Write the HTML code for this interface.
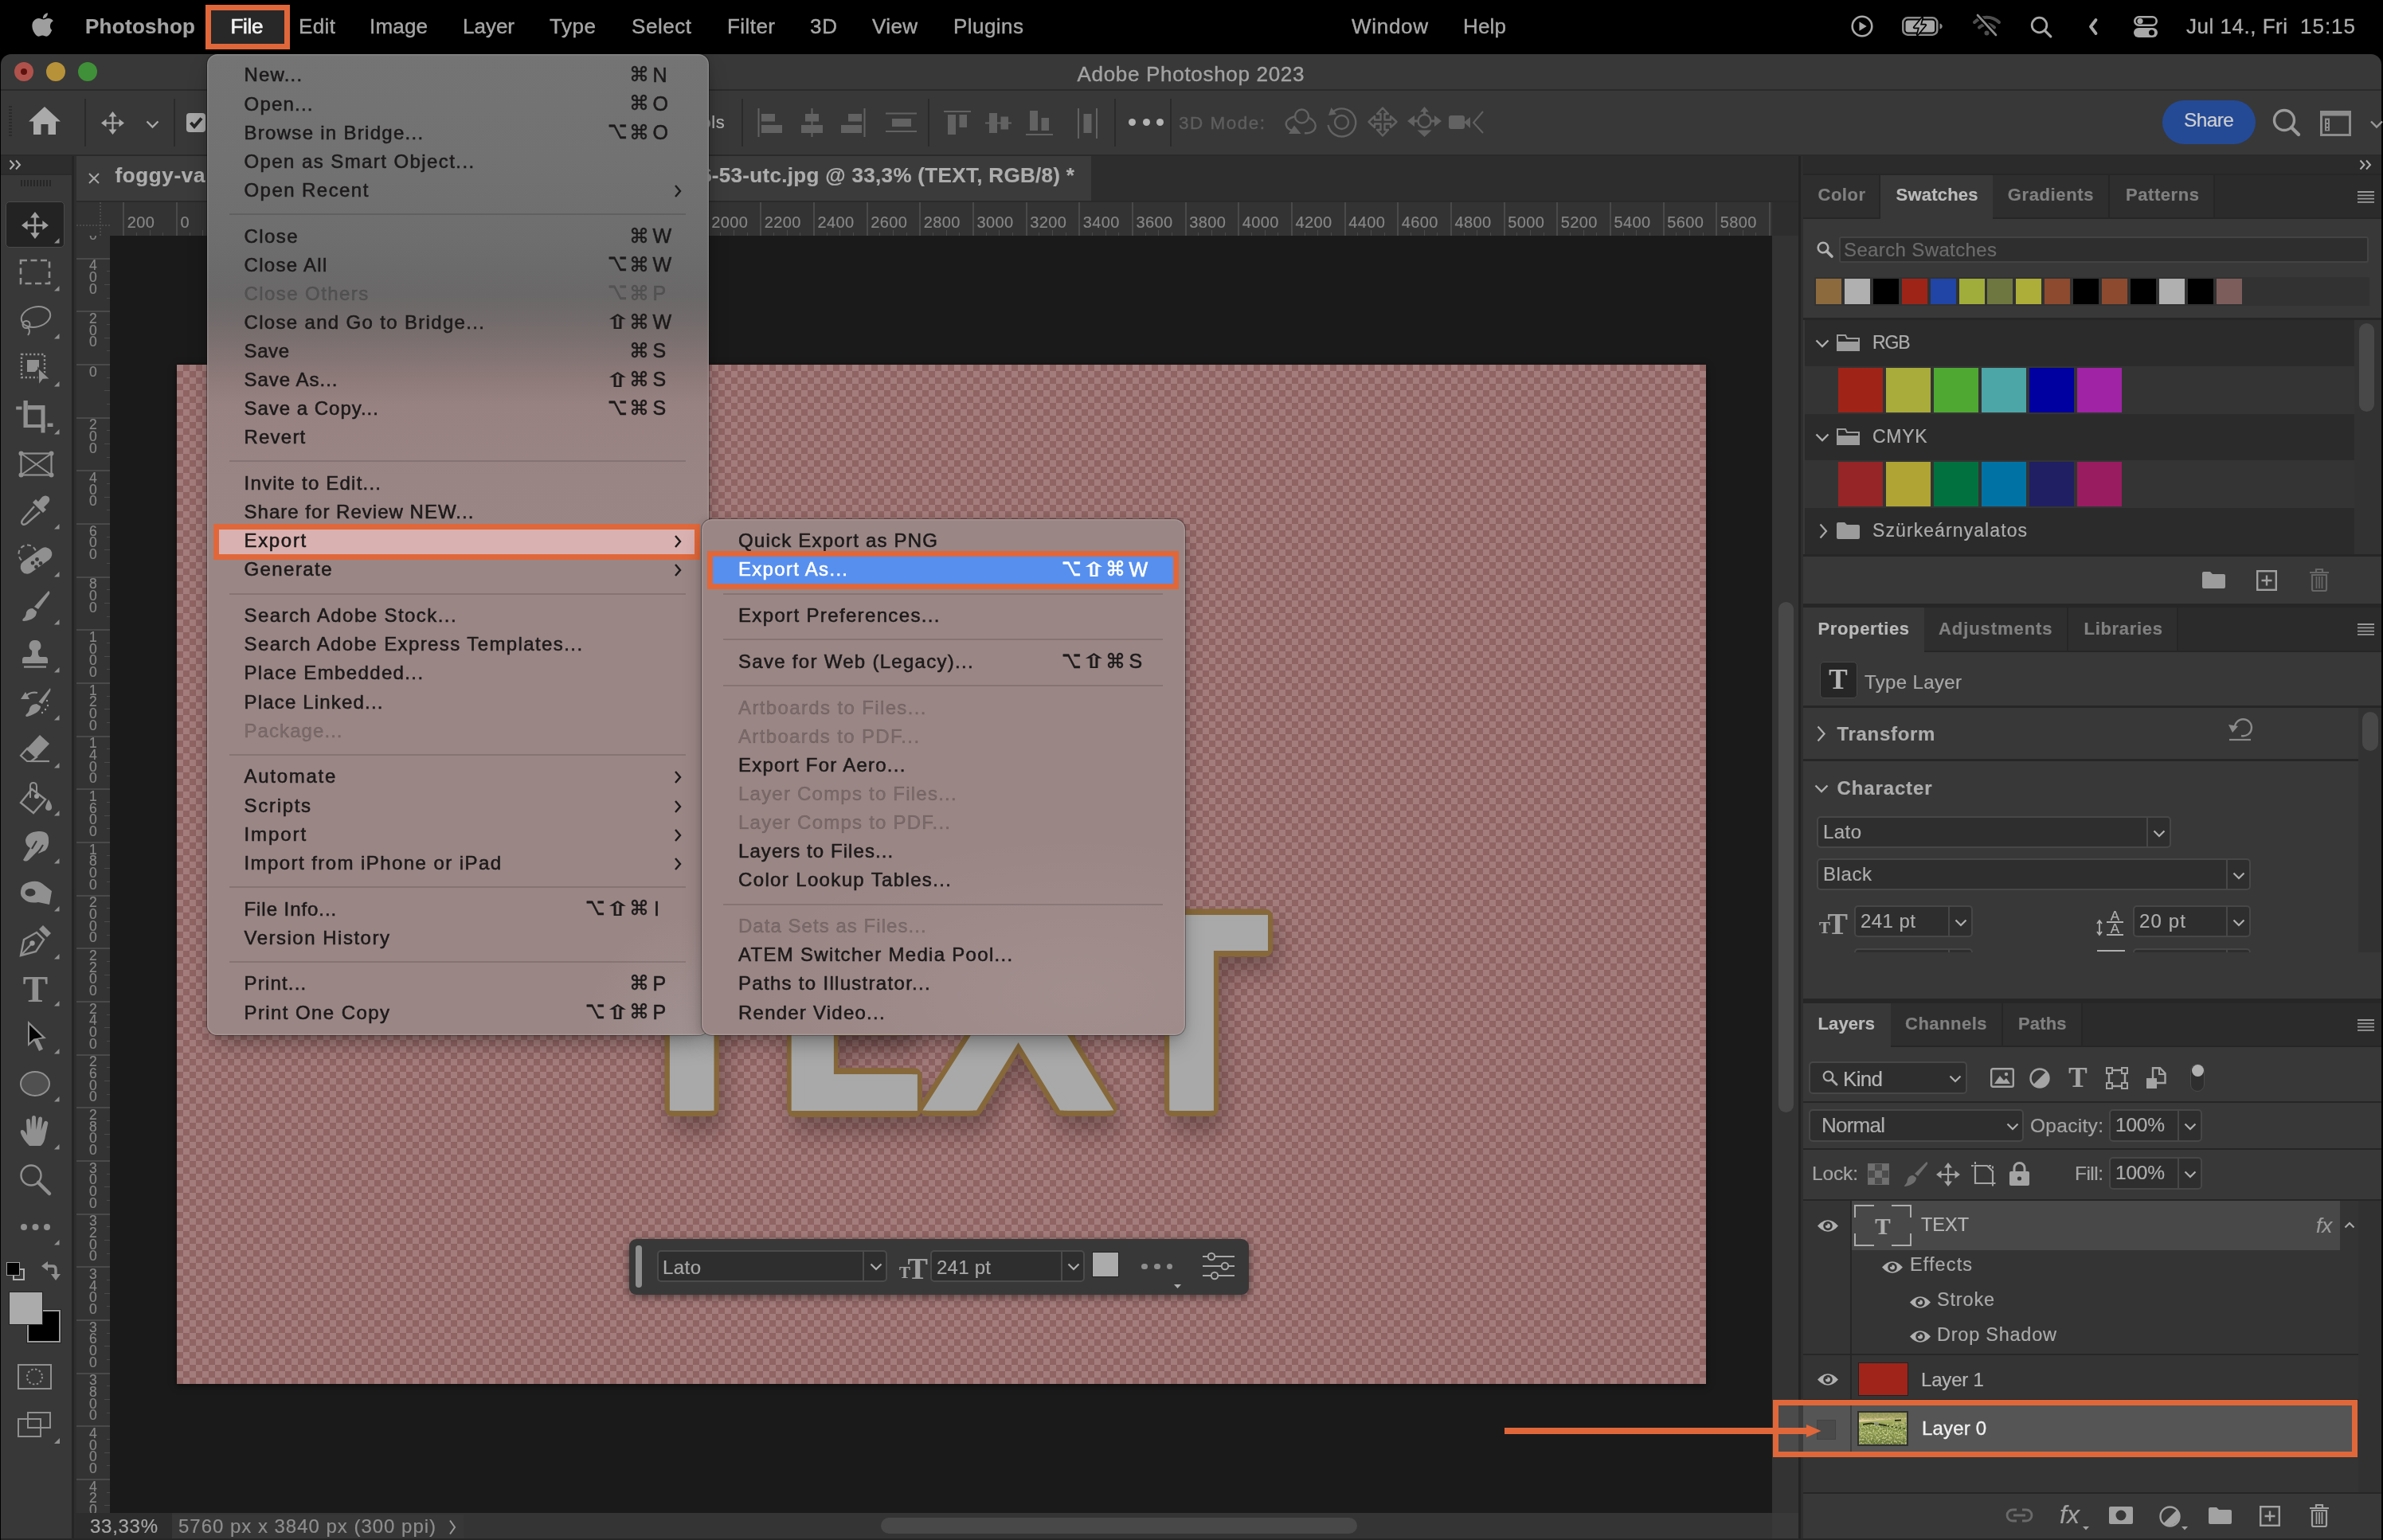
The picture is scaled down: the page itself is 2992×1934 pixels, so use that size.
<!DOCTYPE html>
<html lang="en"><head><meta charset="utf-8"><title>Adobe Photoshop 2023</title><style>html,body{margin:0;padding:0;background:#000;}body{width:2992px;height:1934px;overflow:hidden;position:relative;will-change:transform;font-family:'Liberation Sans','DejaVu Sans',sans-serif;}div,span,svg{position:absolute;}span{white-space:pre;-webkit-text-stroke:.2px;}svg{overflow:visible;}</style></head>
<body>
<div style="left:0px;top:0px;width:2992px;height:68px;background:#000;"></div>
<svg style="left:40px;top:14.5px;" width="27" height="32" viewBox="-1 0 28 32"><path fill="#9e9e9e" d="M19.6 0.6c0.2 1.9-0.5 3.7-1.6 5-1.1 1.4-2.9 2.4-4.6 2.3-0.2-1.8 0.6-3.7 1.7-4.9C16.2 1.6 18.100 0.700 19.6 0.6zM25.2 23.1c-0.7 1.6-1 2.300-1.900 3.700-1.300 2-3.100 4.400-5.300 4.400-2 0-2.500-1.300-5.200-1.300-2.700 0-3.300 1.300-5.200 1.300-2.200 0-3.900-2.200-5.200-4.200C-1.100 21.600-1.500 15.100 1 11.700c1.700-2.500 4.400-3.900 6.900-3.900 2.600 0 4.200 1.400 6.300 1.400 2.100 0 3.300-1.400 6.300-1.400 2.300 0 4.700 1.200 6.400 3.400C21.300 14.300 22.200 21.700 25.200 23.100z"/></svg>
<span style="left:107.0px;top:19.6px;font-size:26px;line-height:26px;color:#a2a2a2;font-weight:700;letter-spacing:0.28px;">Photoshop</span>
<div style="left:258px;top:6px;width:106px;height:56px;background:#282828;border:7px solid #e0673a;box-sizing:border-box;"></div>
<span style="left:289.5px;top:19.6px;font-size:26px;line-height:26px;color:#f2f2f2;letter-spacing:-0.30px;-webkit-text-stroke:.7px;">File</span>
<span style="left:375.0px;top:19.6px;font-size:26px;line-height:26px;color:#a6a6a6;letter-spacing:0.40px;-webkit-text-stroke:.4px;">Edit</span>
<span style="left:464.0px;top:19.6px;font-size:26px;line-height:26px;color:#a6a6a6;letter-spacing:0.18px;-webkit-text-stroke:.4px;">Image</span>
<span style="left:581.0px;top:19.6px;font-size:26px;line-height:26px;color:#a6a6a6;letter-spacing:-0.01px;-webkit-text-stroke:.4px;">Layer</span>
<span style="left:690.0px;top:19.6px;font-size:26px;line-height:26px;color:#a6a6a6;letter-spacing:0.54px;-webkit-text-stroke:.4px;">Type</span>
<span style="left:793.0px;top:19.6px;font-size:26px;line-height:26px;color:#a6a6a6;letter-spacing:0.55px;-webkit-text-stroke:.4px;">Select</span>
<span style="left:913.0px;top:19.6px;font-size:26px;line-height:26px;color:#a6a6a6;letter-spacing:0.44px;-webkit-text-stroke:.4px;">Filter</span>
<span style="left:1017.0px;top:19.6px;font-size:26px;line-height:26px;color:#a6a6a6;letter-spacing:0.75px;-webkit-text-stroke:.4px;">3D</span>
<span style="left:1095.0px;top:19.6px;font-size:26px;line-height:26px;color:#a6a6a6;letter-spacing:0.37px;-webkit-text-stroke:.4px;">View</span>
<span style="left:1197.0px;top:19.6px;font-size:26px;line-height:26px;color:#a6a6a6;letter-spacing:0.45px;-webkit-text-stroke:.4px;">Plugins</span>
<span style="left:1697.0px;top:19.6px;font-size:26px;line-height:26px;color:#a6a6a6;letter-spacing:0.70px;-webkit-text-stroke:.4px;">Window</span>
<span style="left:1837.0px;top:19.6px;font-size:26px;line-height:26px;color:#a6a6a6;letter-spacing:0.17px;-webkit-text-stroke:.4px;">Help</span>
<svg style="left:2324px;top:19px;" width="28" height="28" viewBox="0 0 28 28"><circle cx="14" cy="14" r="12.3" fill="none" stroke="#a8a8a8" stroke-width="2.6"/><path d="M10.5 8.300 L19.700 14 L10.5 19.700Z" fill="#a8a8a8"/></svg>
<svg style="left:2388px;top:21px;" width="52" height="25" viewBox="0 0 52 25"><rect x="1.3" y="1.3" width="43" height="21.4" rx="6" fill="none" stroke="#8a8a8a" stroke-width="2.6"/><rect x="4.5" y="4.5" width="36.600" height="15" rx="3.200" fill="#a8a8a8"/><path d="M47.5 8.5 v7 c2.400-0.600 3.200-2 3.200-3.500 s-0.800-2.900-3.200-3.500z" fill="#8a8a8a"/><path d="M25.5 1.500 L15.500 13.500 H22 L19.500 22.500 L29.500 10.500 H23 Z" fill="#000" stroke="#000" stroke-width="3.400" stroke-linejoin="round"/><path d="M25.5 1.500 L15.500 13.500 H22 L19.500 22.500 L29.500 10.500 H23 Z" fill="#a8a8a8"/></svg>
<svg style="left:2476px;top:17px;" width="38" height="30" viewBox="0 0 38 30"><g fill="none" stroke="#4e4e4e" stroke-width="4" stroke-linecap="round"><path d="M3 11 C11.500 2.500 25.500 2.500 34 11"/><path d="M9 17.500 C14.500 12 22.500 12 28 17.500"/></g><circle cx="18.500" cy="24.500" r="3" fill="#4e4e4e"/><path d="M7 2 L30 27" stroke="#000" stroke-width="6"/><path d="M7 2 L30 27" stroke="#8c8c8c" stroke-width="2.600" stroke-linecap="round"/></svg>
<svg style="left:2549px;top:20px;" width="28" height="28" viewBox="0 0 28 28"><circle cx="11.500" cy="11.500" r="9.300" fill="none" stroke="#a8a8a8" stroke-width="2.800"/><path d="M18.300 18.300 L25.800 25.800" stroke="#a8a8a8" stroke-width="3.200" stroke-linecap="round"/></svg>
<svg style="left:2622px;top:23px;" width="12" height="21" viewBox="0 0 12 21"><path d="M9.500 2 L3 10.500 L9.500 19" fill="none" stroke="#a8a8a8" stroke-width="3.800" stroke-linecap="round" stroke-linejoin="round"/></svg>
<svg style="left:2679px;top:20px;" width="30" height="27" viewBox="0 0 30 27"><rect x="1.300" y="1.300" width="27.400" height="10.400" rx="5.200" fill="none" stroke="#a8a8a8" stroke-width="2.600"/><circle cx="8" cy="6.500" r="3.600" fill="#a8a8a8"/><rect x="0" y="15" width="30" height="12" rx="6" fill="#a8a8a8"/><circle cx="22.500" cy="21" r="3.500" fill="#000"/></svg>
<span style="left:2745.0px;top:19.6px;font-size:26px;line-height:26px;color:#adadad;letter-spacing:0.51px;-webkit-text-stroke:.3px;">Jul 14., Fri</span>
<span style="left:2888.0px;top:19.6px;font-size:26px;line-height:26px;color:#adadad;letter-spacing:0.98px;-webkit-text-stroke:.3px;">15:15</span>
<div style="left:1px;top:68px;width:2989px;height:1866px;background:#383838;border-radius:13px 13px 0 0;"></div>
<div style="left:18px;top:78px;width:24px;height:24px;background:#b0524c;border-radius:50%;"></div>
<div style="left:58px;top:78px;width:24px;height:24px;background:#b89239;border-radius:50%;"></div>
<div style="left:98px;top:78px;width:24px;height:24px;background:#3f9038;border-radius:50%;"></div>
<div style="left:26px;top:86px;width:8px;height:8px;background:#5e120d;border-radius:50%;"></div>
<span style="left:1352.5px;top:79.5px;font-size:26px;line-height:26px;color:#a2a2a2;letter-spacing:0.69px;-webkit-text-stroke:.4px;">Adobe Photoshop 2023</span>
<div style="left:1px;top:111.5px;width:2989px;height:2px;background:#2a2a2a;"></div>
<div style="left:1px;top:114px;width:2989px;height:79px;background:#383838;"></div>
<div style="left:1px;top:193.5px;width:2989px;height:2px;background:#2a2a2a;"></div>
<div style="left:11px;top:133px;width:4px;height:39px;background:repeating-linear-gradient(#2a2a2a 0 2px,transparent 2px 4px);"></div>
<div style="left:106px;top:124px;width:2px;height:60px;background:#2a2a2a;"></div>
<div style="left:218px;top:124px;width:2px;height:60px;background:#2a2a2a;"></div>
<div style="left:931px;top:124px;width:2px;height:60px;background:#2a2a2a;"></div>
<div style="left:1165px;top:124px;width:2px;height:60px;background:#2a2a2a;"></div>
<div style="left:1399px;top:124px;width:2px;height:60px;background:#2a2a2a;"></div>
<div style="left:1469px;top:124px;width:2px;height:60px;background:#2a2a2a;"></div>
<svg style="left:36px;top:134px;" width="40" height="36" viewBox="0 0 40 36"><path fill="#aaaaaa" d="M20 0 L40 18.500 L34 18.500 L34 35 L24.500 35 L24.500 22 L15.500 22 L15.500 35 L6 35 L6 18.500 L0 18.500Z"/></svg>
<svg style="left:126.5px;top:139.5px;" width="29" height="29" viewBox="0 0 29 29"><g stroke="#aaaaaa" stroke-width="2.2" fill="none"><path d="M14.500 4 V25 M4 14.500 H25"/></g><path fill="#aaaaaa" d="M14.500 0 L19.500 6.500 H9.500Z M14.500 29 L9.500 22.500 H19.500Z M0 14.500 L6.500 9.500 V19.500Z M29 14.500 L22.500 9.500 V19.500Z"/></svg>
<svg style="left:183px;top:151px;" width="17" height="11" viewBox="0 0 17 11"><path d="M1.500 1.500 L8.500 8.500 L15.500 1.500" fill="none" stroke="#aaaaaa" stroke-width="2.400"/></svg>
<div style="left:234px;top:142px;width:24px;height:24px;background:#a8a8a8;border-radius:4px;"></div>
<svg style="left:234px;top:142px;" width="24" height="24" viewBox="0 0 24 24"><path d="M5.500 12 L10 17 L19 6.500" fill="none" stroke="#262626" stroke-width="4"/></svg>
<span style="left:270.0px;top:143.1px;font-size:22px;line-height:22px;color:#b0b0b0;">Auto-Select:</span>
<span style="left:647.7px;top:143.1px;font-size:22px;line-height:22px;color:#b0b0b0;letter-spacing:0.63px;">Show Transform Controls</span>
<svg style="left:951px;top:136px;" width="32" height="36" viewBox="0 0 32 36"><rect x="0.500" y="0" width="2" height="36" fill="#626262"/><rect x="5" y="7" width="17" height="9.500" fill="#626262"/><rect x="5" y="21" width="26" height="10" fill="#626262"/></svg>
<svg style="left:1006px;top:136px;" width="27" height="36" viewBox="0 0 27 36"><rect x="12.500" y="0" width="2" height="36" fill="#626262"/><rect x="5" y="7" width="17" height="9.500" fill="#626262"/><rect x="0" y="21" width="27" height="10" fill="#626262"/></svg>
<svg style="left:1055px;top:136px;" width="32" height="36" viewBox="0 0 32 36"><rect x="29.500" y="0" width="2" height="36" fill="#626262"/><rect x="10" y="7" width="17" height="9.500" fill="#626262"/><rect x="1" y="21" width="26" height="10" fill="#626262"/></svg>
<svg style="left:1112px;top:136px;" width="40" height="36" viewBox="0 0 40 36"><rect x="0" y="5.500" width="39" height="2" fill="#626262"/><rect x="8" y="13" width="24" height="10" fill="#626262"/><rect x="0" y="28" width="39" height="2" fill="#626262"/></svg>
<svg style="left:1185px;top:136px;" width="34" height="36" viewBox="0 0 34 36"><rect x="0" y="3" width="34" height="2" fill="#626262"/><rect x="5" y="8" width="10" height="25" fill="#626262"/><rect x="19.500" y="8" width="9.500" height="16" fill="#626262"/></svg>
<svg style="left:1237px;top:136px;" width="33" height="36" viewBox="0 0 33 36"><rect x="0" y="17.500" width="33" height="2" fill="#626262"/><rect x="5" y="6" width="10" height="25" fill="#626262"/><rect x="19.500" y="10.500" width="9.500" height="16" fill="#626262"/></svg>
<svg style="left:1288px;top:136px;" width="34" height="36" viewBox="0 0 34 36"><rect x="0" y="32" width="34" height="2" fill="#626262"/><rect x="5" y="3" width="10" height="25" fill="#626262"/><rect x="19.500" y="12" width="9.500" height="16" fill="#626262"/></svg>
<svg style="left:1353px;top:136px;" width="26" height="36" viewBox="0 0 26 36"><rect x="0" y="0" width="2" height="38" fill="#626262"/><rect x="7.500" y="7" width="10" height="24" fill="#626262"/><rect x="23" y="0" width="2" height="38" fill="#626262"/></svg>
<div style="left:1417.1px;top:149px;width:9px;height:9px;background:#b4b4b4;border-radius:50%;"></div>
<div style="left:1434.5px;top:149px;width:9px;height:9px;background:#b4b4b4;border-radius:50%;"></div>
<div style="left:1451.9px;top:149px;width:9px;height:9px;background:#b4b4b4;border-radius:50%;"></div>
<span style="left:1480.0px;top:143.5px;font-size:22.5px;line-height:22.5px;color:#5e5e5e;letter-spacing:1.49px;-webkit-text-stroke:.4px;">3D Mode:</span>
<svg style="left:1611px;top:134px;" width="43" height="38" viewBox="0 0 43 38"><g fill="none" stroke="#626262" stroke-width="2.400"><circle cx="23.500" cy="12" r="8.500"/><path d="M14 12.500 C-2 17 2 30 17 31.500"/><path d="M33 14 C47 22 40 35 27 33"/></g><path d="M7 34 L14 23.500 L22.500 34Z" fill="#626262"/></svg>
<svg style="left:1665px;top:134px;" width="39" height="38" viewBox="0 0 39 38"><g fill="none" stroke="#626262" stroke-width="2.400"><circle cx="19.500" cy="19.500" r="8.500"/><path d="M8.500 6.500 A17.500 17.500 0 1 1 2.500 23"/></g><path d="M3 11 L6.500 1 L13 9.500Z" fill="#626262"/></svg>
<svg style="left:1717px;top:134px;" width="38" height="38" viewBox="0 0 38 38"><path fill="none" stroke="#626262" stroke-width="2.400" stroke-linejoin="round" d="M19 1.500 L26 9 H21.500 V16.500 H29 V12 L36.500 19 L29 26 V21.500 H21.500 V29 H26 L19 36.500 L12 29 H16.500 V21.500 H9 V26 L1.500 19 L9 12 V16.500 H16.500 V9 H12Z"/></svg>
<svg style="left:1767px;top:134px;" width="43" height="38" viewBox="0 0 43 38"><circle cx="21.500" cy="18" r="8" fill="none" stroke="#626262" stroke-width="2.400"/><path fill="#626262" d="M21.500 0 L27 6.500 H16Z M21.500 38 L12.500 29.500 H30.500Z M0 18 L9 11 V25Z M43 18 L34 11 V25Z"/><path d="M21.500 5 V10 M6 18 H13 M30 18 H37" stroke="#626262" stroke-width="3"/></svg>
<svg style="left:1819px;top:134px;" width="44" height="38" viewBox="0 0 44 38"><rect x="0" y="11" width="20" height="17" rx="3" fill="#626262"/><path d="M19 19.500 L27 13 V27Z" fill="#626262"/><path d="M43 6 L31 20 L43 33" fill="none" stroke="#626262" stroke-width="2"/></svg>
<div style="left:2715px;top:126px;width:117px;height:55px;background:#244a96;border-radius:28px;"></div>
<span style="left:2742.0px;top:139.3px;font-size:24.5px;line-height:24.5px;color:#cfcfcf;letter-spacing:-0.60px;">Share</span>
<svg style="left:2852px;top:136px;" width="38" height="38" viewBox="0 0 38 38"><circle cx="16" cy="15" r="12.500" fill="none" stroke="#9a9a9a" stroke-width="3.400"/><path d="M25 24 L34 33" stroke="#9a9a9a" stroke-width="4.400" stroke-linecap="round"/></svg>
<svg style="left:2913px;top:139px;" width="40" height="33" viewBox="0 0 40 33"><rect x="1.500" y="1.500" width="36" height="29" fill="none" stroke="#8c8c8c" stroke-width="3"/><rect x="1.500" y="1.500" width="36" height="5" fill="#8c8c8c"/><rect x="6" y="9.500" width="6" height="16" fill="#8c8c8c"/><rect x="8" y="12" width="2" height="3" fill="#383838"/><rect x="8" y="17" width="2" height="3" fill="#383838"/><rect x="8" y="22" width="2" height="2" fill="#383838"/></svg>
<svg style="left:2976px;top:151px;" width="14" height="11" viewBox="0 0 14 11"><path d="M1 1.500 L8 8.500 L15 1.500" fill="none" stroke="#9a9a9a" stroke-width="2.400"/></svg>
<div style="left:1px;top:196px;width:89px;height:1738px;background:#383838;"></div>
<div style="left:1px;top:196px;width:89px;height:22px;background:#2d2d2d;"></div>
<div style="left:1px;top:218px;width:89px;height:2px;background:#2a2a2a;"></div>
<svg style="left:11px;top:200px;" width="16" height="14" viewBox="0 0 16 14"><path d="M1.500 1.500 L6.500 7 L1.500 12.500 M9 1.500 L14 7 L9 12.500" fill="none" stroke="#b0b0b0" stroke-width="2"/></svg>
<div style="left:26px;top:226px;width:38px;height:8px;background:repeating-linear-gradient(90deg,#262626 0 2px,transparent 2px 4px);"></div>
<div style="left:7px;top:253px;width:74px;height:58px;background:#232323;border:1px solid #4a4a4a;box-sizing:border-box;border-radius:5px;"></div>
<svg style="left:23.5px;top:263px;" width="40" height="40" viewBox="0 0 40 40"><g transform="translate(3 3) scale(1.170)"><g stroke="#a0a0a0" stroke-width="2.2" fill="none"><path d="M14.500 4 V25 M4 14.500 H25"/></g><path fill="#a0a0a0" d="M14.500 0 L19.500 6.500 H9.500Z M14.500 29 L9.500 22.500 H19.500Z M0 14.500 L6.500 9.500 V19.500Z M29 14.500 L22.500 9.500 V19.500Z"/></g></svg>
<svg style="left:68px;top:299px;" width="6.5" height="6.5" viewBox="0 0 6.5 6.5"><path d="M6.500 0 V6.500 H0Z" fill="#909090"/></svg>
<svg style="left:23.5px;top:322.9px;" width="40" height="40" viewBox="0 0 40 40"><rect x="2" y="4" width="36" height="29" fill="none" stroke="#909090" stroke-width="2.600" stroke-dasharray="8 4.500"/></svg>
<svg style="left:68px;top:358.9px;" width="6.5" height="6.5" viewBox="0 0 6.5 6.5"><path d="M6.500 0 V6.500 H0Z" fill="#909090"/></svg>
<svg style="left:23.5px;top:382.8px;" width="40" height="40" viewBox="0 0 40 40"><ellipse cx="21" cy="15" rx="18.500" ry="12.500" fill="none" stroke="#909090" stroke-width="2" transform="rotate(-14 21 15)"/><circle cx="9" cy="24.500" r="4.500" fill="none" stroke="#909090" stroke-width="2"/><path d="M11 28 Q15 33 11 38" fill="none" stroke="#909090" stroke-width="2" /></svg>
<svg style="left:68px;top:418.8px;" width="6.5" height="6.5" viewBox="0 0 6.5 6.5"><path d="M6.500 0 V6.500 H0Z" fill="#909090"/></svg>
<svg style="left:23.5px;top:442.7px;" width="40" height="40" viewBox="0 0 40 40"><rect x="3" y="2" width="29" height="29" fill="none" stroke="#909090" stroke-width="2.400" stroke-dasharray="2.400 2.600"/><path d="M10 9 H25 V19 L20 24 H10Z" fill="#909090"/><path d="M24 19 L39 33 L30 33.500 L24.500 41Z" fill="#909090" stroke="#383838" stroke-width="1.500"/></svg>
<svg style="left:68px;top:478.7px;" width="6.5" height="6.5" viewBox="0 0 6.5 6.5"><path d="M6.500 0 V6.500 H0Z" fill="#909090"/></svg>
<svg style="left:23.5px;top:502.6px;" width="40" height="40" viewBox="0 0 40 40"><path d="M5.500 0 H10.800 V30 H32.500 V34 H5.500Z" fill="#909090" /><path d="M10.800 6 H32.500 V40.500 H27.500 V11.500 H10.800Z" fill="#909090" /><path d="M-3.800 7.500 H3.500 V11.500 H-3.800Z" fill="#909090" /><path d="M35.500 28.500 H42.500 V33 H35.500Z" fill="#909090" /></svg>
<svg style="left:68px;top:538.6px;" width="6.5" height="6.5" viewBox="0 0 6.5 6.5"><path d="M6.500 0 V6.500 H0Z" fill="#909090"/></svg>
<svg style="left:23.5px;top:562.5px;" width="40" height="40" viewBox="0 0 40 40"><rect x="2.500" y="6.500" width="38" height="27" fill="none" stroke="#909090" stroke-width="2.200"/><path d="M2.500 6.500 L40.500 33.500 M40.500 6.500 L2.500 33.500" fill="none" stroke="#909090" stroke-width="2" /><circle cx="2.5" cy="6.5" r="3" fill="#909090"/><circle cx="2.5" cy="33.5" r="3" fill="#909090"/><circle cx="40.5" cy="6.5" r="3" fill="#909090"/><circle cx="40.5" cy="33.5" r="3" fill="#909090"/></svg>
<svg style="left:23.5px;top:622.4px;" width="40" height="40" viewBox="0 0 40 40"><path d="M19 14 L5 30 Q2 34 4 36 Q6 38 10 35 L26 21" fill="none" stroke="#909090" stroke-width="2.4" /><path d="M17 9 L21 5 L24 8 L29 2 Q33 -1 37 2 Q40 6 36 10 L31 15 L34 18 L30 22Z" fill="#909090" /></svg>
<svg style="left:68px;top:658.4px;" width="6.5" height="6.5" viewBox="0 0 6.5 6.5"><path d="M6.500 0 V6.500 H0Z" fill="#909090"/></svg>
<svg style="left:23.5px;top:682.3px;" width="40" height="40" viewBox="0 0 40 40"><circle cx="10.500" cy="13.500" r="11" fill="none" stroke="#909090" stroke-width="2" stroke-dasharray="5 3.500"/><rect x="-1" y="13.500" width="45" height="17" rx="8.500" fill="#909090" transform="rotate(-36 21.500 22)"/><circle cx="17" cy="25" r="2.400" fill="#383838"/><circle cx="22.500" cy="20.500" r="2.400" fill="#383838"/><circle cx="21.500" cy="30" r="2.400" fill="#383838"/><circle cx="27" cy="25.500" r="2.400" fill="#383838"/></svg>
<svg style="left:68px;top:718.3px;" width="6.5" height="6.5" viewBox="0 0 6.5 6.5"><path d="M6.500 0 V6.500 H0Z" fill="#909090"/></svg>
<svg style="left:23.5px;top:742.2px;" width="40" height="40" viewBox="0 0 40 40"><path d="M37 0 Q39 1 38 4 L24 23 L19 20 Z" fill="#909090" /><path d="M17 22 L22 26 Q22 36 6 38 Q3 38 5 35 Q9 32 9 27 Q11 22 17 22Z" fill="#909090" /></svg>
<svg style="left:68px;top:778.2px;" width="6.5" height="6.5" viewBox="0 0 6.5 6.5"><path d="M6.500 0 V6.500 H0Z" fill="#909090"/></svg>
<svg style="left:23.5px;top:802.1px;" width="40" height="40" viewBox="0 0 40 40"><path d="M20 2 A7 7 0 0 1 24 15 Q23 20 26 23 H33 Q36 23 36 27 V31 H4 V27 Q4 23 7 23 H14 Q17 20 16 15 A7 7 0 0 1 20 2Z" fill="#909090" /><path d="M6 35.500 H34" fill="none" stroke="#909090" stroke-width="2.4" /></svg>
<svg style="left:68px;top:838.1px;" width="6.5" height="6.5" viewBox="0 0 6.5 6.5"><path d="M6.500 0 V6.500 H0Z" fill="#909090"/></svg>
<svg style="left:23.5px;top:862px;" width="40" height="40" viewBox="0 0 40 40"><path d="M39 2 Q40 4 39 6 L29 22 L24.500 19.500 Z" fill="#909090" /><path d="M22 22 L27 25 Q27 33 10 38 Q7 38 9 35 Q13 32 13 28 Q15 22 22 22Z" fill="#909090" /><path d="M7 14 Q13 6 23 8" fill="none" stroke="#909090" stroke-width="2.2" /><path d="M2 16 L8 7 L13 16Z" fill="#909090" /><circle cx="35" cy="18" r="1.200" fill="#9c9c9c"/><circle cx="36" cy="24" r="1.200" fill="#9c9c9c"/><circle cx="33" cy="29" r="1.200" fill="#9c9c9c"/><circle cx="29" cy="33" r="1.200" fill="#9c9c9c"/></svg>
<svg style="left:68px;top:898px;" width="6.5" height="6.5" viewBox="0 0 6.5 6.5"><path d="M6.500 0 V6.500 H0Z" fill="#909090"/></svg>
<svg style="left:23.5px;top:921.9px;" width="40" height="40" viewBox="0 0 40 40"><path d="M26 1 L38 12 L21 30 L9 19Z" fill="#909090" /><path d="M11 17 L2 27 L10 34 H15 L23 28" fill="none" stroke="#909090" stroke-width="2.2" /><path d="M14 34 H38" fill="none" stroke="#909090" stroke-width="2.2" /></svg>
<svg style="left:68px;top:957.9px;" width="6.5" height="6.5" viewBox="0 0 6.5 6.5"><path d="M6.500 0 V6.500 H0Z" fill="#909090"/></svg>
<svg style="left:23.5px;top:981.8px;" width="40" height="40" viewBox="0 0 40 40"><path d="M16 9 L33 22 L18 39 L2 26Z" fill="none" stroke="#909090" stroke-width="2.4" /><path d="M14 20 V5 Q14 1 18 1 Q22 1 22 6 V13" fill="none" stroke="#909090" stroke-width="2" /><circle cx="22" cy="18" r="3" fill="#9c9c9c"/><path d="M37 22 Q42 30 41 33 Q40 36 37 36 Q34 36 33 33 Q33 29 37 22Z" fill="#909090" /></svg>
<svg style="left:68px;top:1017.8px;" width="6.5" height="6.5" viewBox="0 0 6.5 6.5"><path d="M6.500 0 V6.500 H0Z" fill="#909090"/></svg>
<svg style="left:23.5px;top:1041.7px;" width="40" height="40" viewBox="0 0 40 40"><path d="M8 13 Q10 3 24 2 Q37 1 37 12 Q38 20 33 26 L24 30 L27 23 L12 38 Q8 41 5 38 L14 23 Q8 20 8 13Z" fill="#909090" /><path d="M16 24 L22 14 M25 27 L30 19" stroke="#383838" stroke-width="2.200" fill="none"/></svg>
<svg style="left:68px;top:1077.7px;" width="6.5" height="6.5" viewBox="0 0 6.5 6.5"><path d="M6.500 0 V6.500 H0Z" fill="#909090"/></svg>
<svg style="left:23.5px;top:1101.6px;" width="40" height="40" viewBox="0 0 40 40"><path d="M2 17 Q3 8 12 6 Q24 2 32 10 L41 17 L38 34 L24 31 Q12 33 6 27 Q1 23 2 17Z" fill="#909090" /><ellipse cx="14" cy="19" rx="6.500" ry="5" fill="#383838"/><path d="M8 23 Q12 27 20 23" stroke="#909090" stroke-width="2.400" fill="none"/></svg>
<svg style="left:68px;top:1137.6px;" width="6.5" height="6.5" viewBox="0 0 6.5 6.5"><path d="M6.500 0 V6.500 H0Z" fill="#909090"/></svg>
<svg style="left:23.5px;top:1161.5px;" width="40" height="40" viewBox="0 0 40 40"><path d="M22 9 L6 18 L2 38 L21 33 L31 18Z" fill="none" stroke="#909090" stroke-width="2.4" /><path d="M3 37 L15 24" fill="none" stroke="#909090" stroke-width="2" /><circle cx="16.500" cy="22.500" r="3.200" fill="#9c9c9c"/><path d="M25 5 L30 0 L40 10 L35 15Z" fill="#909090" /></svg>
<svg style="left:68px;top:1197.5px;" width="6.5" height="6.5" viewBox="0 0 6.5 6.5"><path d="M6.500 0 V6.500 H0Z" fill="#909090"/></svg>
<span style="left:28.8px;top:1218.6px;font-size:47px;line-height:47px;color:#909090;font-weight:700;font-family:'Liberation Serif',serif;">T</span>
<svg style="left:68px;top:1257.4px;" width="6.5" height="6.5" viewBox="0 0 6.5 6.5"><path d="M6.500 0 V6.500 H0Z" fill="#909090"/></svg>
<svg style="left:23.5px;top:1281.3px;" width="40" height="40" viewBox="0 0 40 40"><path d="M11 1 L11 33 L19 26 L25 39 L30 36.500 L24 24 L34 23Z" fill="#909090"/><path d="M13 6 L13 28.500 L18.500 23.500 L22 23 L29 21.500Z" fill="#050505"/></svg>
<svg style="left:68px;top:1317.3px;" width="6.5" height="6.5" viewBox="0 0 6.5 6.5"><path d="M6.500 0 V6.500 H0Z" fill="#909090"/></svg>
<svg style="left:23.5px;top:1341.2px;" width="40" height="40" viewBox="0 0 40 40"><ellipse cx="20" cy="20" rx="18" ry="15" fill="#505050" stroke="#909090" stroke-width="2"/></svg>
<svg style="left:68px;top:1377.2px;" width="6.5" height="6.5" viewBox="0 0 6.5 6.5"><path d="M6.500 0 V6.500 H0Z" fill="#909090"/></svg>
<svg style="left:23.5px;top:1401.1px;" width="40" height="40" viewBox="0 0 40 40"><path d="M13 38 Q5 30 2 22 Q1 18 4 18 Q7 18 10 25 L9 7 Q9 4 11.500 4 Q14 4 14 7 L15 18 L16 3 Q16 0 18.500 0 Q21 0 21 3 L21.500 18 L24 4 Q24.500 1 27 1.500 Q29.500 2 29 5 L27.500 19 L31 9 Q32 6 34.500 7 Q37 8 36 11 L33 25 Q32 34 27 38Z" fill="#909090" /></svg>
<svg style="left:68px;top:1437.1px;" width="6.5" height="6.5" viewBox="0 0 6.5 6.5"><path d="M6.500 0 V6.500 H0Z" fill="#909090"/></svg>
<svg style="left:23.5px;top:1461px;" width="40" height="40" viewBox="0 0 40 40"><circle cx="15" cy="15" r="12.500" fill="none" stroke="#909090" stroke-width="2.400"/><path d="M24 24 L38 38" fill="none" stroke="#909090" stroke-width="4.5" stroke-linecap="round"/></svg>
<svg style="left:23.5px;top:1520.9px;" width="40" height="40" viewBox="0 0 40 40"><circle cx="6" cy="20" r="4" fill="#909090"/><circle cx="20.5" cy="20" r="4" fill="#909090"/><circle cx="35" cy="20" r="4" fill="#909090"/></svg>
<svg style="left:68px;top:1556.9px;" width="6.5" height="6.5" viewBox="0 0 6.5 6.5"><path d="M6.500 0 V6.500 H0Z" fill="#909090"/></svg>
<div style="left:8px;top:1585px;width:17px;height:17px;background:#000;border:1.500px solid #9c9c9c;box-sizing:border-box;"></div>
<div style="left:16px;top:1593px;width:15px;height:15px;background:#383838;border:2px solid #b0b0b0;box-sizing:border-box;"></div>
<div style="left:8px;top:1585px;width:17px;height:17px;background:#000;border:1.500px solid #9c9c9c;box-sizing:border-box;"></div>
<svg style="left:52px;top:1584px;" width="24" height="24" viewBox="0 0 24 24"><path d="M6 6 H14 Q18 6 18 10 V18" fill="none" stroke="#909090" stroke-width="3.400"/><path d="M0 6 L8 0 V12Z M18 24 L12 16 H24Z" fill="#909090"/></svg>
<div style="left:34px;top:1645px;width:42px;height:41px;background:#000;border:2px solid #9a9a9a;box-sizing:border-box;outline:1px solid #222;"></div>
<div style="left:10.5px;top:1621.5px;width:41px;height:40.5px;background:#ababab;border:1.500px solid #222;box-sizing:content-box;"></div>
<svg style="left:22px;top:1713px;" width="43" height="32" viewBox="0 0 43 32"><rect x="1" y="1" width="41" height="30" fill="none" stroke="#909090" stroke-width="2"/><circle cx="21.500" cy="16" r="9.500" fill="none" stroke="#909090" stroke-width="2" stroke-dasharray="2.500 2.500"/></svg>
<svg style="left:22px;top:1773px;" width="43" height="33" viewBox="0 0 43 33"><rect x="13" y="1" width="28" height="19" fill="#383838" stroke="#909090" stroke-width="2"/><rect x="1" y="9" width="28" height="22" fill="#383838" stroke="#909090" stroke-width="2"/><rect x="13" y="9" width="16" height="11" fill="#383838" stroke="#909090" stroke-width="2"/></svg>
<svg style="left:68px;top:1806px;" width="7" height="7" viewBox="0 0 7 7"><path d="M7 0 V7 H0Z" fill="#909090"/></svg>
<div style="left:90px;top:196px;width:3px;height:1738px;background:#252525;"></div>
<div style="left:93px;top:196px;width:3px;height:1738px;background:#2e2e2e;"></div>
<div style="left:96px;top:196px;width:2162px;height:56px;background:#2d2d2d;"></div>
<div style="left:96px;top:196px;width:1274px;height:56px;background:#3b3b3b;"></div>
<div style="left:96px;top:252px;width:2162px;height:2px;background:#2a2a2a;"></div>
<svg style="left:111px;top:217px;" width="14" height="14" viewBox="0 0 14 14"><path d="M1 1 L13 13 M13 1 L1 13" stroke="#a8a8a8" stroke-width="2"/></svg>
<span style="left:144.4px;top:207.3px;font-size:26px;line-height:26px;color:#adadad;font-weight:700;letter-spacing:0.67px;">foggy-va</span>
<span style="left:258.5px;top:207.3px;font-size:26px;line-height:26px;color:#adadad;font-weight:700;letter-spacing:1.90px;">lley-at-sunrise-tuscany-italy-2023-01-23-05-2</span>
<span style="left:879.0px;top:207.3px;font-size:26px;line-height:26px;color:#adadad;font-weight:700;letter-spacing:0.32px;">6-53-utc.jpg @ 33,3% (TEXT, RGB/8) *</span>
<div style="left:96px;top:254px;width:2129px;height:42px;background:#333333;"></div>
<div style="left:96px;top:296px;width:42px;height:1604px;background:#333333;"></div>
<div style="left:2225px;top:254px;width:33px;height:42px;background:#2d2d2d;"></div>
<div style="left:96px;top:282px;width:42px;height:1.5px;background:repeating-linear-gradient(90deg,#4a4a4a 0 2px,transparent 2px 4px);"></div>
<div style="left:125px;top:254px;width:1.5px;height:42px;background:repeating-linear-gradient(#4a4a4a 0 2px,transparent 2px 4px);"></div>
<div style="left:154px;top:254px;width:1.5px;height:42px;background:#4a4a4a;"></div>
<span style="left:159.8px;top:269.3px;font-size:20px;line-height:20px;color:#868686;letter-spacing:0.41px;">200</span>
<div style="left:171px;top:292px;width:1px;height:4px;background:#4a4a4a;"></div>
<div style="left:188px;top:289px;width:1px;height:7px;background:#4a4a4a;"></div>
<div style="left:204px;top:292px;width:1px;height:4px;background:#4a4a4a;"></div>
<div style="left:221px;top:254px;width:1.5px;height:42px;background:#4a4a4a;"></div>
<span style="left:226.5px;top:269.3px;font-size:20px;line-height:20px;color:#868686;">0</span>
<div style="left:238px;top:292px;width:1px;height:4px;background:#4a4a4a;"></div>
<div style="left:254px;top:289px;width:1px;height:7px;background:#4a4a4a;"></div>
<div style="left:271px;top:292px;width:1px;height:4px;background:#4a4a4a;"></div>
<div style="left:288px;top:254px;width:1.5px;height:42px;background:#4a4a4a;"></div>
<span style="left:293.2px;top:269.3px;font-size:20px;line-height:20px;color:#868686;letter-spacing:0.41px;">200</span>
<div style="left:304px;top:292px;width:1px;height:4px;background:#4a4a4a;"></div>
<div style="left:321px;top:289px;width:1px;height:7px;background:#4a4a4a;"></div>
<div style="left:338px;top:292px;width:1px;height:4px;background:#4a4a4a;"></div>
<div style="left:354px;top:254px;width:1.5px;height:42px;background:#4a4a4a;"></div>
<span style="left:359.8px;top:269.3px;font-size:20px;line-height:20px;color:#868686;letter-spacing:0.41px;">400</span>
<div style="left:371px;top:292px;width:1px;height:4px;background:#4a4a4a;"></div>
<div style="left:388px;top:289px;width:1px;height:7px;background:#4a4a4a;"></div>
<div style="left:404px;top:292px;width:1px;height:4px;background:#4a4a4a;"></div>
<div style="left:421px;top:254px;width:1.5px;height:42px;background:#4a4a4a;"></div>
<span style="left:426.5px;top:269.3px;font-size:20px;line-height:20px;color:#868686;letter-spacing:0.41px;">600</span>
<div style="left:438px;top:292px;width:1px;height:4px;background:#4a4a4a;"></div>
<div style="left:454px;top:289px;width:1px;height:7px;background:#4a4a4a;"></div>
<div style="left:471px;top:292px;width:1px;height:4px;background:#4a4a4a;"></div>
<div style="left:488px;top:254px;width:1.5px;height:42px;background:#4a4a4a;"></div>
<span style="left:493.2px;top:269.3px;font-size:20px;line-height:20px;color:#868686;letter-spacing:0.41px;">800</span>
<div style="left:504px;top:292px;width:1px;height:4px;background:#4a4a4a;"></div>
<div style="left:521px;top:289px;width:1px;height:7px;background:#4a4a4a;"></div>
<div style="left:538px;top:292px;width:1px;height:4px;background:#4a4a4a;"></div>
<div style="left:554px;top:254px;width:1.5px;height:42px;background:#4a4a4a;"></div>
<span style="left:559.8px;top:269.3px;font-size:20px;line-height:20px;color:#868686;letter-spacing:0.37px;">1000</span>
<div style="left:571px;top:292px;width:1px;height:4px;background:#4a4a4a;"></div>
<div style="left:588px;top:289px;width:1px;height:7px;background:#4a4a4a;"></div>
<div style="left:604px;top:292px;width:1px;height:4px;background:#4a4a4a;"></div>
<div style="left:621px;top:254px;width:1.5px;height:42px;background:#4a4a4a;"></div>
<span style="left:626.5px;top:269.3px;font-size:20px;line-height:20px;color:#868686;letter-spacing:0.37px;">1200</span>
<div style="left:638px;top:292px;width:1px;height:4px;background:#4a4a4a;"></div>
<div style="left:654px;top:289px;width:1px;height:7px;background:#4a4a4a;"></div>
<div style="left:671px;top:292px;width:1px;height:4px;background:#4a4a4a;"></div>
<div style="left:688px;top:254px;width:1.5px;height:42px;background:#4a4a4a;"></div>
<span style="left:693.2px;top:269.3px;font-size:20px;line-height:20px;color:#868686;letter-spacing:0.37px;">1400</span>
<div style="left:704px;top:292px;width:1px;height:4px;background:#4a4a4a;"></div>
<div style="left:721px;top:289px;width:1px;height:7px;background:#4a4a4a;"></div>
<div style="left:738px;top:292px;width:1px;height:4px;background:#4a4a4a;"></div>
<div style="left:754px;top:254px;width:1.5px;height:42px;background:#4a4a4a;"></div>
<span style="left:759.8px;top:269.3px;font-size:20px;line-height:20px;color:#868686;letter-spacing:0.37px;">1600</span>
<div style="left:771px;top:292px;width:1px;height:4px;background:#4a4a4a;"></div>
<div style="left:788px;top:289px;width:1px;height:7px;background:#4a4a4a;"></div>
<div style="left:804px;top:292px;width:1px;height:4px;background:#4a4a4a;"></div>
<div style="left:821px;top:254px;width:1.5px;height:42px;background:#4a4a4a;"></div>
<span style="left:826.5px;top:269.3px;font-size:20px;line-height:20px;color:#868686;letter-spacing:0.37px;">1800</span>
<div style="left:838px;top:292px;width:1px;height:4px;background:#4a4a4a;"></div>
<div style="left:854px;top:289px;width:1px;height:7px;background:#4a4a4a;"></div>
<div style="left:871px;top:292px;width:1px;height:4px;background:#4a4a4a;"></div>
<div style="left:888px;top:254px;width:1.5px;height:42px;background:#4a4a4a;"></div>
<span style="left:893.2px;top:269.3px;font-size:20px;line-height:20px;color:#868686;letter-spacing:0.37px;">2000</span>
<div style="left:904px;top:292px;width:1px;height:4px;background:#4a4a4a;"></div>
<div style="left:921px;top:289px;width:1px;height:7px;background:#4a4a4a;"></div>
<div style="left:938px;top:292px;width:1px;height:4px;background:#4a4a4a;"></div>
<div style="left:954px;top:254px;width:1.5px;height:42px;background:#4a4a4a;"></div>
<span style="left:959.8px;top:269.3px;font-size:20px;line-height:20px;color:#868686;letter-spacing:0.37px;">2200</span>
<div style="left:971px;top:292px;width:1px;height:4px;background:#4a4a4a;"></div>
<div style="left:988px;top:289px;width:1px;height:7px;background:#4a4a4a;"></div>
<div style="left:1004px;top:292px;width:1px;height:4px;background:#4a4a4a;"></div>
<div style="left:1021px;top:254px;width:1.5px;height:42px;background:#4a4a4a;"></div>
<span style="left:1026.5px;top:269.3px;font-size:20px;line-height:20px;color:#868686;letter-spacing:0.37px;">2400</span>
<div style="left:1038px;top:292px;width:1px;height:4px;background:#4a4a4a;"></div>
<div style="left:1054px;top:289px;width:1px;height:7px;background:#4a4a4a;"></div>
<div style="left:1071px;top:292px;width:1px;height:4px;background:#4a4a4a;"></div>
<div style="left:1088px;top:254px;width:1.5px;height:42px;background:#4a4a4a;"></div>
<span style="left:1093.2px;top:269.3px;font-size:20px;line-height:20px;color:#868686;letter-spacing:0.37px;">2600</span>
<div style="left:1104px;top:292px;width:1px;height:4px;background:#4a4a4a;"></div>
<div style="left:1121px;top:289px;width:1px;height:7px;background:#4a4a4a;"></div>
<div style="left:1138px;top:292px;width:1px;height:4px;background:#4a4a4a;"></div>
<div style="left:1154px;top:254px;width:1.5px;height:42px;background:#4a4a4a;"></div>
<span style="left:1159.8px;top:269.3px;font-size:20px;line-height:20px;color:#868686;letter-spacing:0.37px;">2800</span>
<div style="left:1171px;top:292px;width:1px;height:4px;background:#4a4a4a;"></div>
<div style="left:1188px;top:289px;width:1px;height:7px;background:#4a4a4a;"></div>
<div style="left:1204px;top:292px;width:1px;height:4px;background:#4a4a4a;"></div>
<div style="left:1221px;top:254px;width:1.5px;height:42px;background:#4a4a4a;"></div>
<span style="left:1226.5px;top:269.3px;font-size:20px;line-height:20px;color:#868686;letter-spacing:0.37px;">3000</span>
<div style="left:1238px;top:292px;width:1px;height:4px;background:#4a4a4a;"></div>
<div style="left:1254px;top:289px;width:1px;height:7px;background:#4a4a4a;"></div>
<div style="left:1271px;top:292px;width:1px;height:4px;background:#4a4a4a;"></div>
<div style="left:1288px;top:254px;width:1.5px;height:42px;background:#4a4a4a;"></div>
<span style="left:1293.2px;top:269.3px;font-size:20px;line-height:20px;color:#868686;letter-spacing:0.37px;">3200</span>
<div style="left:1304px;top:292px;width:1px;height:4px;background:#4a4a4a;"></div>
<div style="left:1321px;top:289px;width:1px;height:7px;background:#4a4a4a;"></div>
<div style="left:1338px;top:292px;width:1px;height:4px;background:#4a4a4a;"></div>
<div style="left:1354px;top:254px;width:1.5px;height:42px;background:#4a4a4a;"></div>
<span style="left:1359.8px;top:269.3px;font-size:20px;line-height:20px;color:#868686;letter-spacing:0.37px;">3400</span>
<div style="left:1371px;top:292px;width:1px;height:4px;background:#4a4a4a;"></div>
<div style="left:1388px;top:289px;width:1px;height:7px;background:#4a4a4a;"></div>
<div style="left:1404px;top:292px;width:1px;height:4px;background:#4a4a4a;"></div>
<div style="left:1421px;top:254px;width:1.5px;height:42px;background:#4a4a4a;"></div>
<span style="left:1426.5px;top:269.3px;font-size:20px;line-height:20px;color:#868686;letter-spacing:0.37px;">3600</span>
<div style="left:1438px;top:292px;width:1px;height:4px;background:#4a4a4a;"></div>
<div style="left:1454px;top:289px;width:1px;height:7px;background:#4a4a4a;"></div>
<div style="left:1471px;top:292px;width:1px;height:4px;background:#4a4a4a;"></div>
<div style="left:1488px;top:254px;width:1.5px;height:42px;background:#4a4a4a;"></div>
<span style="left:1493.2px;top:269.3px;font-size:20px;line-height:20px;color:#868686;letter-spacing:0.37px;">3800</span>
<div style="left:1504px;top:292px;width:1px;height:4px;background:#4a4a4a;"></div>
<div style="left:1521px;top:289px;width:1px;height:7px;background:#4a4a4a;"></div>
<div style="left:1538px;top:292px;width:1px;height:4px;background:#4a4a4a;"></div>
<div style="left:1554px;top:254px;width:1.5px;height:42px;background:#4a4a4a;"></div>
<span style="left:1559.8px;top:269.3px;font-size:20px;line-height:20px;color:#868686;letter-spacing:0.37px;">4000</span>
<div style="left:1571px;top:292px;width:1px;height:4px;background:#4a4a4a;"></div>
<div style="left:1588px;top:289px;width:1px;height:7px;background:#4a4a4a;"></div>
<div style="left:1604px;top:292px;width:1px;height:4px;background:#4a4a4a;"></div>
<div style="left:1621px;top:254px;width:1.5px;height:42px;background:#4a4a4a;"></div>
<span style="left:1626.5px;top:269.3px;font-size:20px;line-height:20px;color:#868686;letter-spacing:0.37px;">4200</span>
<div style="left:1638px;top:292px;width:1px;height:4px;background:#4a4a4a;"></div>
<div style="left:1654px;top:289px;width:1px;height:7px;background:#4a4a4a;"></div>
<div style="left:1671px;top:292px;width:1px;height:4px;background:#4a4a4a;"></div>
<div style="left:1688px;top:254px;width:1.5px;height:42px;background:#4a4a4a;"></div>
<span style="left:1693.2px;top:269.3px;font-size:20px;line-height:20px;color:#868686;letter-spacing:0.37px;">4400</span>
<div style="left:1704px;top:292px;width:1px;height:4px;background:#4a4a4a;"></div>
<div style="left:1721px;top:289px;width:1px;height:7px;background:#4a4a4a;"></div>
<div style="left:1738px;top:292px;width:1px;height:4px;background:#4a4a4a;"></div>
<div style="left:1754px;top:254px;width:1.5px;height:42px;background:#4a4a4a;"></div>
<span style="left:1759.8px;top:269.3px;font-size:20px;line-height:20px;color:#868686;letter-spacing:0.37px;">4600</span>
<div style="left:1771px;top:292px;width:1px;height:4px;background:#4a4a4a;"></div>
<div style="left:1788px;top:289px;width:1px;height:7px;background:#4a4a4a;"></div>
<div style="left:1804px;top:292px;width:1px;height:4px;background:#4a4a4a;"></div>
<div style="left:1821px;top:254px;width:1.5px;height:42px;background:#4a4a4a;"></div>
<span style="left:1826.5px;top:269.3px;font-size:20px;line-height:20px;color:#868686;letter-spacing:0.37px;">4800</span>
<div style="left:1838px;top:292px;width:1px;height:4px;background:#4a4a4a;"></div>
<div style="left:1854px;top:289px;width:1px;height:7px;background:#4a4a4a;"></div>
<div style="left:1871px;top:292px;width:1px;height:4px;background:#4a4a4a;"></div>
<div style="left:1888px;top:254px;width:1.5px;height:42px;background:#4a4a4a;"></div>
<span style="left:1893.2px;top:269.3px;font-size:20px;line-height:20px;color:#868686;letter-spacing:0.37px;">5000</span>
<div style="left:1904px;top:292px;width:1px;height:4px;background:#4a4a4a;"></div>
<div style="left:1921px;top:289px;width:1px;height:7px;background:#4a4a4a;"></div>
<div style="left:1938px;top:292px;width:1px;height:4px;background:#4a4a4a;"></div>
<div style="left:1954px;top:254px;width:1.5px;height:42px;background:#4a4a4a;"></div>
<span style="left:1959.8px;top:269.3px;font-size:20px;line-height:20px;color:#868686;letter-spacing:0.37px;">5200</span>
<div style="left:1971px;top:292px;width:1px;height:4px;background:#4a4a4a;"></div>
<div style="left:1988px;top:289px;width:1px;height:7px;background:#4a4a4a;"></div>
<div style="left:2004px;top:292px;width:1px;height:4px;background:#4a4a4a;"></div>
<div style="left:2021px;top:254px;width:1.5px;height:42px;background:#4a4a4a;"></div>
<span style="left:2026.5px;top:269.3px;font-size:20px;line-height:20px;color:#868686;letter-spacing:0.37px;">5400</span>
<div style="left:2038px;top:292px;width:1px;height:4px;background:#4a4a4a;"></div>
<div style="left:2054px;top:289px;width:1px;height:7px;background:#4a4a4a;"></div>
<div style="left:2071px;top:292px;width:1px;height:4px;background:#4a4a4a;"></div>
<div style="left:2088px;top:254px;width:1.5px;height:42px;background:#4a4a4a;"></div>
<span style="left:2093.2px;top:269.3px;font-size:20px;line-height:20px;color:#868686;letter-spacing:0.37px;">5600</span>
<div style="left:2104px;top:292px;width:1px;height:4px;background:#4a4a4a;"></div>
<div style="left:2121px;top:289px;width:1px;height:7px;background:#4a4a4a;"></div>
<div style="left:2138px;top:292px;width:1px;height:4px;background:#4a4a4a;"></div>
<div style="left:2154px;top:254px;width:1.5px;height:42px;background:#4a4a4a;"></div>
<span style="left:2159.8px;top:269.3px;font-size:20px;line-height:20px;color:#868686;letter-spacing:0.37px;">5800</span>
<div style="left:2171px;top:292px;width:1px;height:4px;background:#4a4a4a;"></div>
<div style="left:2188px;top:289px;width:1px;height:7px;background:#4a4a4a;"></div>
<div style="left:2204px;top:292px;width:1px;height:4px;background:#4a4a4a;"></div>
<div style="left:2221px;top:254px;width:1.5px;height:42px;background:#4a4a4a;"></div>
<div style="left:138px;top:254px;width:2px;height:42px;background:#333333;"></div>
<div style="left:96px;top:324px;width:42px;height:1.5px;background:#4a4a4a;"></div>
<span style="left:112.1px;top:325.4px;font-size:17.5px;line-height:17.5px;color:#868686;">4</span>
<span style="left:112.1px;top:340.0px;font-size:17.5px;line-height:17.5px;color:#868686;">0</span>
<span style="left:112.1px;top:354.6px;font-size:17.5px;line-height:17.5px;color:#868686;">0</span>
<div style="left:134px;top:340px;width:4px;height:1px;background:#4a4a4a;"></div>
<div style="left:131px;top:357px;width:7px;height:1px;background:#4a4a4a;"></div>
<div style="left:134px;top:374px;width:4px;height:1px;background:#4a4a4a;"></div>
<div style="left:96px;top:390px;width:42px;height:1.5px;background:#4a4a4a;"></div>
<span style="left:112.1px;top:392.0px;font-size:17.5px;line-height:17.5px;color:#868686;">2</span>
<span style="left:112.1px;top:406.6px;font-size:17.5px;line-height:17.5px;color:#868686;">0</span>
<span style="left:112.1px;top:421.2px;font-size:17.5px;line-height:17.5px;color:#868686;">0</span>
<div style="left:134px;top:407px;width:4px;height:1px;background:#4a4a4a;"></div>
<div style="left:131px;top:424px;width:7px;height:1px;background:#4a4a4a;"></div>
<div style="left:134px;top:440px;width:4px;height:1px;background:#4a4a4a;"></div>
<div style="left:96px;top:457px;width:42px;height:1.5px;background:#4a4a4a;"></div>
<span style="left:112.1px;top:458.7px;font-size:17.5px;line-height:17.5px;color:#868686;">0</span>
<div style="left:134px;top:474px;width:4px;height:1px;background:#4a4a4a;"></div>
<div style="left:131px;top:490px;width:7px;height:1px;background:#4a4a4a;"></div>
<div style="left:134px;top:507px;width:4px;height:1px;background:#4a4a4a;"></div>
<div style="left:96px;top:524px;width:42px;height:1.5px;background:#4a4a4a;"></div>
<span style="left:112.1px;top:525.4px;font-size:17.5px;line-height:17.5px;color:#868686;">2</span>
<span style="left:112.1px;top:540.0px;font-size:17.5px;line-height:17.5px;color:#868686;">0</span>
<span style="left:112.1px;top:554.6px;font-size:17.5px;line-height:17.5px;color:#868686;">0</span>
<div style="left:134px;top:540px;width:4px;height:1px;background:#4a4a4a;"></div>
<div style="left:131px;top:557px;width:7px;height:1px;background:#4a4a4a;"></div>
<div style="left:134px;top:574px;width:4px;height:1px;background:#4a4a4a;"></div>
<div style="left:96px;top:590px;width:42px;height:1.5px;background:#4a4a4a;"></div>
<span style="left:112.1px;top:592.0px;font-size:17.5px;line-height:17.5px;color:#868686;">4</span>
<span style="left:112.1px;top:606.6px;font-size:17.5px;line-height:17.5px;color:#868686;">0</span>
<span style="left:112.1px;top:621.2px;font-size:17.5px;line-height:17.5px;color:#868686;">0</span>
<div style="left:134px;top:607px;width:4px;height:1px;background:#4a4a4a;"></div>
<div style="left:131px;top:624px;width:7px;height:1px;background:#4a4a4a;"></div>
<div style="left:134px;top:640px;width:4px;height:1px;background:#4a4a4a;"></div>
<div style="left:96px;top:657px;width:42px;height:1.5px;background:#4a4a4a;"></div>
<span style="left:112.1px;top:658.7px;font-size:17.5px;line-height:17.5px;color:#868686;">6</span>
<span style="left:112.1px;top:673.3px;font-size:17.5px;line-height:17.5px;color:#868686;">0</span>
<span style="left:112.1px;top:687.9px;font-size:17.5px;line-height:17.5px;color:#868686;">0</span>
<div style="left:134px;top:674px;width:4px;height:1px;background:#4a4a4a;"></div>
<div style="left:131px;top:690px;width:7px;height:1px;background:#4a4a4a;"></div>
<div style="left:134px;top:707px;width:4px;height:1px;background:#4a4a4a;"></div>
<div style="left:96px;top:724px;width:42px;height:1.5px;background:#4a4a4a;"></div>
<span style="left:112.1px;top:725.4px;font-size:17.5px;line-height:17.5px;color:#868686;">8</span>
<span style="left:112.1px;top:740.0px;font-size:17.5px;line-height:17.5px;color:#868686;">0</span>
<span style="left:112.1px;top:754.6px;font-size:17.5px;line-height:17.5px;color:#868686;">0</span>
<div style="left:134px;top:740px;width:4px;height:1px;background:#4a4a4a;"></div>
<div style="left:131px;top:757px;width:7px;height:1px;background:#4a4a4a;"></div>
<div style="left:134px;top:774px;width:4px;height:1px;background:#4a4a4a;"></div>
<div style="left:96px;top:790px;width:42px;height:1.5px;background:#4a4a4a;"></div>
<span style="left:112.1px;top:792.0px;font-size:17.5px;line-height:17.5px;color:#868686;">1</span>
<span style="left:112.1px;top:806.6px;font-size:17.5px;line-height:17.5px;color:#868686;">0</span>
<span style="left:112.1px;top:821.2px;font-size:17.5px;line-height:17.5px;color:#868686;">0</span>
<span style="left:112.1px;top:835.8px;font-size:17.5px;line-height:17.5px;color:#868686;">0</span>
<div style="left:134px;top:807px;width:4px;height:1px;background:#4a4a4a;"></div>
<div style="left:131px;top:824px;width:7px;height:1px;background:#4a4a4a;"></div>
<div style="left:134px;top:840px;width:4px;height:1px;background:#4a4a4a;"></div>
<div style="left:96px;top:857px;width:42px;height:1.5px;background:#4a4a4a;"></div>
<span style="left:112.1px;top:858.7px;font-size:17.5px;line-height:17.5px;color:#868686;">1</span>
<span style="left:112.1px;top:873.3px;font-size:17.5px;line-height:17.5px;color:#868686;">2</span>
<span style="left:112.1px;top:887.9px;font-size:17.5px;line-height:17.5px;color:#868686;">0</span>
<span style="left:112.1px;top:902.5px;font-size:17.5px;line-height:17.5px;color:#868686;">0</span>
<div style="left:134px;top:874px;width:4px;height:1px;background:#4a4a4a;"></div>
<div style="left:131px;top:890px;width:7px;height:1px;background:#4a4a4a;"></div>
<div style="left:134px;top:907px;width:4px;height:1px;background:#4a4a4a;"></div>
<div style="left:96px;top:924px;width:42px;height:1.5px;background:#4a4a4a;"></div>
<span style="left:112.1px;top:925.4px;font-size:17.5px;line-height:17.5px;color:#868686;">1</span>
<span style="left:112.1px;top:940.0px;font-size:17.5px;line-height:17.5px;color:#868686;">4</span>
<span style="left:112.1px;top:954.6px;font-size:17.5px;line-height:17.5px;color:#868686;">0</span>
<span style="left:112.1px;top:969.2px;font-size:17.5px;line-height:17.5px;color:#868686;">0</span>
<div style="left:134px;top:940px;width:4px;height:1px;background:#4a4a4a;"></div>
<div style="left:131px;top:957px;width:7px;height:1px;background:#4a4a4a;"></div>
<div style="left:134px;top:974px;width:4px;height:1px;background:#4a4a4a;"></div>
<div style="left:96px;top:990px;width:42px;height:1.5px;background:#4a4a4a;"></div>
<span style="left:112.1px;top:992.0px;font-size:17.5px;line-height:17.5px;color:#868686;">1</span>
<span style="left:112.1px;top:1006.6px;font-size:17.5px;line-height:17.5px;color:#868686;">6</span>
<span style="left:112.1px;top:1021.2px;font-size:17.5px;line-height:17.5px;color:#868686;">0</span>
<span style="left:112.1px;top:1035.8px;font-size:17.5px;line-height:17.5px;color:#868686;">0</span>
<div style="left:134px;top:1007px;width:4px;height:1px;background:#4a4a4a;"></div>
<div style="left:131px;top:1024px;width:7px;height:1px;background:#4a4a4a;"></div>
<div style="left:134px;top:1040px;width:4px;height:1px;background:#4a4a4a;"></div>
<div style="left:96px;top:1057px;width:42px;height:1.5px;background:#4a4a4a;"></div>
<span style="left:112.1px;top:1058.7px;font-size:17.5px;line-height:17.5px;color:#868686;">1</span>
<span style="left:112.1px;top:1073.3px;font-size:17.5px;line-height:17.5px;color:#868686;">8</span>
<span style="left:112.1px;top:1087.9px;font-size:17.5px;line-height:17.5px;color:#868686;">0</span>
<span style="left:112.1px;top:1102.5px;font-size:17.5px;line-height:17.5px;color:#868686;">0</span>
<div style="left:134px;top:1074px;width:4px;height:1px;background:#4a4a4a;"></div>
<div style="left:131px;top:1090px;width:7px;height:1px;background:#4a4a4a;"></div>
<div style="left:134px;top:1107px;width:4px;height:1px;background:#4a4a4a;"></div>
<div style="left:96px;top:1124px;width:42px;height:1.5px;background:#4a4a4a;"></div>
<span style="left:112.1px;top:1125.4px;font-size:17.5px;line-height:17.5px;color:#868686;">2</span>
<span style="left:112.1px;top:1140.0px;font-size:17.5px;line-height:17.5px;color:#868686;">0</span>
<span style="left:112.1px;top:1154.6px;font-size:17.5px;line-height:17.5px;color:#868686;">0</span>
<span style="left:112.1px;top:1169.2px;font-size:17.5px;line-height:17.5px;color:#868686;">0</span>
<div style="left:134px;top:1140px;width:4px;height:1px;background:#4a4a4a;"></div>
<div style="left:131px;top:1157px;width:7px;height:1px;background:#4a4a4a;"></div>
<div style="left:134px;top:1174px;width:4px;height:1px;background:#4a4a4a;"></div>
<div style="left:96px;top:1190px;width:42px;height:1.5px;background:#4a4a4a;"></div>
<span style="left:112.1px;top:1192.0px;font-size:17.5px;line-height:17.5px;color:#868686;">2</span>
<span style="left:112.1px;top:1206.6px;font-size:17.5px;line-height:17.5px;color:#868686;">2</span>
<span style="left:112.1px;top:1221.2px;font-size:17.5px;line-height:17.5px;color:#868686;">0</span>
<span style="left:112.1px;top:1235.8px;font-size:17.5px;line-height:17.5px;color:#868686;">0</span>
<div style="left:134px;top:1207px;width:4px;height:1px;background:#4a4a4a;"></div>
<div style="left:131px;top:1224px;width:7px;height:1px;background:#4a4a4a;"></div>
<div style="left:134px;top:1240px;width:4px;height:1px;background:#4a4a4a;"></div>
<div style="left:96px;top:1257px;width:42px;height:1.5px;background:#4a4a4a;"></div>
<span style="left:112.1px;top:1258.7px;font-size:17.5px;line-height:17.5px;color:#868686;">2</span>
<span style="left:112.1px;top:1273.3px;font-size:17.5px;line-height:17.5px;color:#868686;">4</span>
<span style="left:112.1px;top:1287.9px;font-size:17.5px;line-height:17.5px;color:#868686;">0</span>
<span style="left:112.1px;top:1302.5px;font-size:17.5px;line-height:17.5px;color:#868686;">0</span>
<div style="left:134px;top:1274px;width:4px;height:1px;background:#4a4a4a;"></div>
<div style="left:131px;top:1290px;width:7px;height:1px;background:#4a4a4a;"></div>
<div style="left:134px;top:1307px;width:4px;height:1px;background:#4a4a4a;"></div>
<div style="left:96px;top:1324px;width:42px;height:1.5px;background:#4a4a4a;"></div>
<span style="left:112.1px;top:1325.4px;font-size:17.5px;line-height:17.5px;color:#868686;">2</span>
<span style="left:112.1px;top:1340.0px;font-size:17.5px;line-height:17.5px;color:#868686;">6</span>
<span style="left:112.1px;top:1354.6px;font-size:17.5px;line-height:17.5px;color:#868686;">0</span>
<span style="left:112.1px;top:1369.2px;font-size:17.5px;line-height:17.5px;color:#868686;">0</span>
<div style="left:134px;top:1340px;width:4px;height:1px;background:#4a4a4a;"></div>
<div style="left:131px;top:1357px;width:7px;height:1px;background:#4a4a4a;"></div>
<div style="left:134px;top:1374px;width:4px;height:1px;background:#4a4a4a;"></div>
<div style="left:96px;top:1390px;width:42px;height:1.5px;background:#4a4a4a;"></div>
<span style="left:112.1px;top:1392.0px;font-size:17.5px;line-height:17.5px;color:#868686;">2</span>
<span style="left:112.1px;top:1406.6px;font-size:17.5px;line-height:17.5px;color:#868686;">8</span>
<span style="left:112.1px;top:1421.2px;font-size:17.5px;line-height:17.5px;color:#868686;">0</span>
<span style="left:112.1px;top:1435.8px;font-size:17.5px;line-height:17.5px;color:#868686;">0</span>
<div style="left:134px;top:1407px;width:4px;height:1px;background:#4a4a4a;"></div>
<div style="left:131px;top:1424px;width:7px;height:1px;background:#4a4a4a;"></div>
<div style="left:134px;top:1440px;width:4px;height:1px;background:#4a4a4a;"></div>
<div style="left:96px;top:1457px;width:42px;height:1.5px;background:#4a4a4a;"></div>
<span style="left:112.1px;top:1458.7px;font-size:17.5px;line-height:17.5px;color:#868686;">3</span>
<span style="left:112.1px;top:1473.3px;font-size:17.5px;line-height:17.5px;color:#868686;">0</span>
<span style="left:112.1px;top:1487.9px;font-size:17.5px;line-height:17.5px;color:#868686;">0</span>
<span style="left:112.1px;top:1502.5px;font-size:17.5px;line-height:17.5px;color:#868686;">0</span>
<div style="left:134px;top:1474px;width:4px;height:1px;background:#4a4a4a;"></div>
<div style="left:131px;top:1490px;width:7px;height:1px;background:#4a4a4a;"></div>
<div style="left:134px;top:1507px;width:4px;height:1px;background:#4a4a4a;"></div>
<div style="left:96px;top:1524px;width:42px;height:1.5px;background:#4a4a4a;"></div>
<span style="left:112.1px;top:1525.4px;font-size:17.5px;line-height:17.5px;color:#868686;">3</span>
<span style="left:112.1px;top:1540.0px;font-size:17.5px;line-height:17.5px;color:#868686;">2</span>
<span style="left:112.1px;top:1554.6px;font-size:17.5px;line-height:17.5px;color:#868686;">0</span>
<span style="left:112.1px;top:1569.2px;font-size:17.5px;line-height:17.5px;color:#868686;">0</span>
<div style="left:134px;top:1540px;width:4px;height:1px;background:#4a4a4a;"></div>
<div style="left:131px;top:1557px;width:7px;height:1px;background:#4a4a4a;"></div>
<div style="left:134px;top:1574px;width:4px;height:1px;background:#4a4a4a;"></div>
<div style="left:96px;top:1590px;width:42px;height:1.5px;background:#4a4a4a;"></div>
<span style="left:112.1px;top:1592.0px;font-size:17.5px;line-height:17.5px;color:#868686;">3</span>
<span style="left:112.1px;top:1606.6px;font-size:17.5px;line-height:17.5px;color:#868686;">4</span>
<span style="left:112.1px;top:1621.2px;font-size:17.5px;line-height:17.5px;color:#868686;">0</span>
<span style="left:112.1px;top:1635.8px;font-size:17.5px;line-height:17.5px;color:#868686;">0</span>
<div style="left:134px;top:1607px;width:4px;height:1px;background:#4a4a4a;"></div>
<div style="left:131px;top:1624px;width:7px;height:1px;background:#4a4a4a;"></div>
<div style="left:134px;top:1640px;width:4px;height:1px;background:#4a4a4a;"></div>
<div style="left:96px;top:1657px;width:42px;height:1.5px;background:#4a4a4a;"></div>
<span style="left:112.1px;top:1658.7px;font-size:17.5px;line-height:17.5px;color:#868686;">3</span>
<span style="left:112.1px;top:1673.3px;font-size:17.5px;line-height:17.5px;color:#868686;">6</span>
<span style="left:112.1px;top:1687.9px;font-size:17.5px;line-height:17.5px;color:#868686;">0</span>
<span style="left:112.1px;top:1702.5px;font-size:17.5px;line-height:17.5px;color:#868686;">0</span>
<div style="left:134px;top:1674px;width:4px;height:1px;background:#4a4a4a;"></div>
<div style="left:131px;top:1690px;width:7px;height:1px;background:#4a4a4a;"></div>
<div style="left:134px;top:1707px;width:4px;height:1px;background:#4a4a4a;"></div>
<div style="left:96px;top:1724px;width:42px;height:1.5px;background:#4a4a4a;"></div>
<span style="left:112.1px;top:1725.4px;font-size:17.5px;line-height:17.5px;color:#868686;">3</span>
<span style="left:112.1px;top:1740.0px;font-size:17.5px;line-height:17.5px;color:#868686;">8</span>
<span style="left:112.1px;top:1754.6px;font-size:17.5px;line-height:17.5px;color:#868686;">0</span>
<span style="left:112.1px;top:1769.2px;font-size:17.5px;line-height:17.5px;color:#868686;">0</span>
<div style="left:134px;top:1740px;width:4px;height:1px;background:#4a4a4a;"></div>
<div style="left:131px;top:1757px;width:7px;height:1px;background:#4a4a4a;"></div>
<div style="left:134px;top:1774px;width:4px;height:1px;background:#4a4a4a;"></div>
<div style="left:96px;top:1790px;width:42px;height:1.5px;background:#4a4a4a;"></div>
<span style="left:112.1px;top:1792.0px;font-size:17.5px;line-height:17.5px;color:#868686;">4</span>
<span style="left:112.1px;top:1806.6px;font-size:17.5px;line-height:17.5px;color:#868686;">0</span>
<span style="left:112.1px;top:1821.2px;font-size:17.5px;line-height:17.5px;color:#868686;">0</span>
<span style="left:112.1px;top:1835.8px;font-size:17.5px;line-height:17.5px;color:#868686;">0</span>
<div style="left:134px;top:1807px;width:4px;height:1px;background:#4a4a4a;"></div>
<div style="left:131px;top:1824px;width:7px;height:1px;background:#4a4a4a;"></div>
<div style="left:134px;top:1840px;width:4px;height:1px;background:#4a4a4a;"></div>
<div style="left:96px;top:1857px;width:42px;height:1.5px;background:#4a4a4a;"></div>
<span style="left:112.1px;top:1858.7px;font-size:17.5px;line-height:17.5px;color:#868686;">4</span>
<span style="left:112.1px;top:1873.3px;font-size:17.5px;line-height:17.5px;color:#868686;">2</span>
<span style="left:112.1px;top:1887.9px;font-size:17.5px;line-height:17.5px;color:#868686;">0</span>
<div style="left:134px;top:1874px;width:4px;height:1px;background:#4a4a4a;"></div>
<div style="left:131px;top:1890px;width:7px;height:1px;background:#4a4a4a;"></div>
<div style="left:96px;top:296px;width:42px;height:14px;overflow:hidden;">
<span style="left:16.1px;top:-9.3px;font-size:17.5px;line-height:17.5px;color:#868686;">0</span>
</div>
<div style="left:138px;top:296px;width:2087px;height:1604px;background:#1a1a1a;"></div>
<div style="left:222px;top:458px;width:1920px;height:1280px;background:;background-color:#a37d7c;background-image:conic-gradient(#8f6463 25%,transparent 0 50%,#8f6463 0 75%,transparent 0);background-size:16px 16px;box-shadow:0 2px 8px rgba(0,0,0,.55);"></div>
<svg style="left:222px;top:458px;" width="1920" height="1280" viewBox="222 458 1920 1280"><defs><filter id="ds" x="-10%" y="-30%" width="120%" height="170%"><feGaussianBlur stdDeviation="15"/></filter></defs><g font-family="Liberation Sans,sans-serif" font-weight="700" font-size="340" stroke-linejoin="round"><g filter="url(#ds)" opacity=".36"><text transform="translate(778.3 1411.5) scale(0.8993 1.0233)" fill="#2a1718" stroke="#2a1718" stroke-width="19" vector-effect="non-scaling-stroke">T</text><text transform="translate(781.3 1411.5) scale(0.8993 1.0233)" fill="#2a1718" stroke="#2a1718" stroke-width="19" vector-effect="non-scaling-stroke">T</text><text transform="translate(784.3 1411.5) scale(0.8993 1.0233)" fill="#2a1718" stroke="#2a1718" stroke-width="19" vector-effect="non-scaling-stroke">T</text><text transform="translate(985.3 1411.5) scale(0.7405 1.0233)" fill="#2a1718" stroke="#2a1718" stroke-width="19" vector-effect="non-scaling-stroke">E</text><text transform="translate(991.3 1411.5) scale(0.7405 1.0233)" fill="#2a1718" stroke="#2a1718" stroke-width="19" vector-effect="non-scaling-stroke">E</text><text transform="translate(997.3 1411.5) scale(0.7405 1.0233)" fill="#2a1718" stroke="#2a1718" stroke-width="19" vector-effect="non-scaling-stroke">E</text><text transform="translate(1166.9 1411.5) scale(0.9966 1.0233)" fill="#2a1718" stroke="#2a1718" stroke-width="19" vector-effect="non-scaling-stroke">X</text><text transform="translate(1171.4 1411.5) scale(0.9966 1.0233)" fill="#2a1718" stroke="#2a1718" stroke-width="19" vector-effect="non-scaling-stroke">X</text><text transform="translate(1175.9 1411.5) scale(0.9966 1.0233)" fill="#2a1718" stroke="#2a1718" stroke-width="19" vector-effect="non-scaling-stroke">X</text><text transform="translate(1405.7 1411.5) scale(0.8993 1.0233)" fill="#2a1718" stroke="#2a1718" stroke-width="19" vector-effect="non-scaling-stroke">T</text><text transform="translate(1408.7 1411.5) scale(0.8993 1.0233)" fill="#2a1718" stroke="#2a1718" stroke-width="19" vector-effect="non-scaling-stroke">T</text><text transform="translate(1411.7 1411.5) scale(0.8993 1.0233)" fill="#2a1718" stroke="#2a1718" stroke-width="19" vector-effect="non-scaling-stroke">T</text></g><text transform="translate(772.3 1391.5) scale(0.8993 1.0233)" fill="#86683a" stroke="#86683a" stroke-width="19.600" vector-effect="non-scaling-stroke">T</text><text transform="translate(775.3 1391.5) scale(0.8993 1.0233)" fill="#86683a" stroke="#86683a" stroke-width="19.600" vector-effect="non-scaling-stroke">T</text><text transform="translate(778.3 1391.5) scale(0.8993 1.0233)" fill="#86683a" stroke="#86683a" stroke-width="19.600" vector-effect="non-scaling-stroke">T</text><text transform="translate(979.3 1391.5) scale(0.7405 1.0233)" fill="#86683a" stroke="#86683a" stroke-width="19.600" vector-effect="non-scaling-stroke">E</text><text transform="translate(985.3 1391.5) scale(0.7405 1.0233)" fill="#86683a" stroke="#86683a" stroke-width="19.600" vector-effect="non-scaling-stroke">E</text><text transform="translate(991.3 1391.5) scale(0.7405 1.0233)" fill="#86683a" stroke="#86683a" stroke-width="19.600" vector-effect="non-scaling-stroke">E</text><text transform="translate(1160.9 1391.5) scale(0.9966 1.0233)" fill="#86683a" stroke="#86683a" stroke-width="19.600" vector-effect="non-scaling-stroke">X</text><text transform="translate(1165.4 1391.5) scale(0.9966 1.0233)" fill="#86683a" stroke="#86683a" stroke-width="19.600" vector-effect="non-scaling-stroke">X</text><text transform="translate(1169.9 1391.5) scale(0.9966 1.0233)" fill="#86683a" stroke="#86683a" stroke-width="19.600" vector-effect="non-scaling-stroke">X</text><text transform="translate(1399.7 1391.5) scale(0.8993 1.0233)" fill="#86683a" stroke="#86683a" stroke-width="19.600" vector-effect="non-scaling-stroke">T</text><text transform="translate(1402.7 1391.5) scale(0.8993 1.0233)" fill="#86683a" stroke="#86683a" stroke-width="19.600" vector-effect="non-scaling-stroke">T</text><text transform="translate(1405.7 1391.5) scale(0.8993 1.0233)" fill="#86683a" stroke="#86683a" stroke-width="19.600" vector-effect="non-scaling-stroke">T</text><text transform="translate(772.3 1391.5) scale(0.8993 1.0233)" fill="#a9a9a9" stroke="#a9a9a9" stroke-width="6" stroke-linejoin="miter" vector-effect="non-scaling-stroke">T</text><text transform="translate(775.3 1391.5) scale(0.8993 1.0233)" fill="#a9a9a9" stroke="#a9a9a9" stroke-width="6" stroke-linejoin="miter" vector-effect="non-scaling-stroke">T</text><text transform="translate(778.3 1391.5) scale(0.8993 1.0233)" fill="#a9a9a9" stroke="#a9a9a9" stroke-width="6" stroke-linejoin="miter" vector-effect="non-scaling-stroke">T</text><text transform="translate(979.3 1391.5) scale(0.7405 1.0233)" fill="#a9a9a9" stroke="#a9a9a9" stroke-width="6" stroke-linejoin="miter" vector-effect="non-scaling-stroke">E</text><text transform="translate(985.3 1391.5) scale(0.7405 1.0233)" fill="#a9a9a9" stroke="#a9a9a9" stroke-width="6" stroke-linejoin="miter" vector-effect="non-scaling-stroke">E</text><text transform="translate(991.3 1391.5) scale(0.7405 1.0233)" fill="#a9a9a9" stroke="#a9a9a9" stroke-width="6" stroke-linejoin="miter" vector-effect="non-scaling-stroke">E</text><text transform="translate(1160.9 1391.5) scale(0.9966 1.0233)" fill="#a9a9a9" stroke="#a9a9a9" stroke-width="6" stroke-linejoin="miter" vector-effect="non-scaling-stroke">X</text><text transform="translate(1165.4 1391.5) scale(0.9966 1.0233)" fill="#a9a9a9" stroke="#a9a9a9" stroke-width="6" stroke-linejoin="miter" vector-effect="non-scaling-stroke">X</text><text transform="translate(1169.9 1391.5) scale(0.9966 1.0233)" fill="#a9a9a9" stroke="#a9a9a9" stroke-width="6" stroke-linejoin="miter" vector-effect="non-scaling-stroke">X</text><text transform="translate(1399.7 1391.5) scale(0.8993 1.0233)" fill="#a9a9a9" stroke="#a9a9a9" stroke-width="6" stroke-linejoin="miter" vector-effect="non-scaling-stroke">T</text><text transform="translate(1402.7 1391.5) scale(0.8993 1.0233)" fill="#a9a9a9" stroke="#a9a9a9" stroke-width="6" stroke-linejoin="miter" vector-effect="non-scaling-stroke">T</text><text transform="translate(1405.7 1391.5) scale(0.8993 1.0233)" fill="#a9a9a9" stroke="#a9a9a9" stroke-width="6" stroke-linejoin="miter" vector-effect="non-scaling-stroke">T</text></g></svg>
<div style="left:2225px;top:296px;width:33px;height:1604px;background:#333333;"></div>
<div style="left:2233px;top:756px;width:19px;height:641px;background:#484848;border-radius:10px;"></div>
<div style="left:96px;top:1900px;width:2162px;height:34px;background:#343434;"></div>
<div style="left:96px;top:1900px;width:120px;height:34px;background:#2d2d2d;"></div>
<div style="left:216px;top:1902px;width:366px;height:32px;background:#373737;"></div>
<div style="left:2225px;top:1900px;width:33px;height:34px;background:#393939;"></div>
<span style="left:113.0px;top:1905.2px;font-size:24px;line-height:24px;color:#a8a8a8;letter-spacing:0.72px;">33,33%</span>
<span style="left:224.0px;top:1905.2px;font-size:24px;line-height:24px;color:#8e8e8e;letter-spacing:0.98px;">5760 px x 3840 px (300 ppi)</span>
<svg style="left:563px;top:1908px;" width="10" height="20" viewBox="0 0 10 20"><path d="M2 1.500 L8 10 L2 18.500" fill="none" stroke="#9a9a9a" stroke-width="2"/></svg>
<div style="left:1106px;top:1906px;width:598px;height:20px;background:#484848;border-radius:10px;"></div>
<div style="left:790px;top:1556px;width:778px;height:69.5px;background:#383838;border-radius:9px;box-shadow:0 3px 12px rgba(0,0,0,.45);"></div>
<div style="left:798px;top:1564px;width:8px;height:53px;background:#8e8e8e;border-radius:4px;"></div>
<div style="left:825px;top:1570px;width:289px;height:40px;background:#2e2e2e;border:2px solid #4b4b4b;box-sizing:border-box;border-radius:5px;"></div>
<div style="left:1083px;top:1572px;width:2px;height:36px;background:#4b4b4b;"></div>
<span style="left:832.0px;top:1579.7px;font-size:24px;line-height:24px;color:#a8a8a8;letter-spacing:0.43px;">Lato</span>
<svg style="left:1092px;top:1586px;" width="16" height="11" viewBox="0 0 16 11"><path d="M1.500 1.500 L8 8 L14.500 1.500" fill="none" stroke="#b0b0b0" stroke-width="2.200"/></svg>
<span style="left:1129.0px;top:1588.2px;font-size:21px;line-height:21px;color:#a0a0a0;font-weight:700;font-family:'Liberation Serif',serif;">T</span>
<span style="left:1139.5px;top:1573.8px;font-size:38px;line-height:38px;color:#a0a0a0;font-weight:700;font-family:'Liberation Serif',serif;">T</span>
<div style="left:1168px;top:1570px;width:194px;height:40px;background:#2e2e2e;border:2px solid #4b4b4b;box-sizing:border-box;border-radius:5px;"></div>
<div style="left:1332px;top:1572px;width:2px;height:36px;background:#4b4b4b;"></div>
<span style="left:1176.0px;top:1579.7px;font-size:24px;line-height:24px;color:#a8a8a8;letter-spacing:0.25px;">241 pt</span>
<svg style="left:1340px;top:1586px;" width="16" height="11" viewBox="0 0 16 11"><path d="M1.500 1.500 L8 8 L14.500 1.500" fill="none" stroke="#b0b0b0" stroke-width="2.200"/></svg>
<div style="left:1371px;top:1571.5px;width:34px;height:32.5px;background:#ababab;border:1px solid #222;box-sizing:border-box;"></div>
<div style="left:1433.3px;top:1586.8px;width:7.4px;height:7.4px;background:#8e8e8e;border-radius:50%;"></div>
<div style="left:1449.3px;top:1586.8px;width:7.4px;height:7.4px;background:#8e8e8e;border-radius:50%;"></div>
<div style="left:1464.8px;top:1586.8px;width:7.4px;height:7.4px;background:#8e8e8e;border-radius:50%;"></div>
<svg style="left:1474px;top:1613px;" width="10" height="6" viewBox="0 0 10 6"><path d="M0 0 H9 L4.500 5Z" fill="#b0b0b0"/></svg>
<svg style="left:1510px;top:1572px;" width="40" height="36" viewBox="0 0 40 36"><g stroke="#a8a8a8" stroke-width="2" fill="#383838"><path d="M0 6 H40 M0 18 H40 M0 30 H40"/><circle cx="11" cy="6" r="4.200"/><circle cx="28" cy="18" r="4.200"/><circle cx="15" cy="30" r="4.200"/></g></svg>
<div style="left:2258px;top:196px;width:3px;height:1738px;background:#232323;"></div>
<div style="left:2261px;top:196px;width:3px;height:1738px;background:#2e2e2e;"></div>
<div style="left:2264px;top:196px;width:726px;height:1738px;background:#383838;"></div>
<div style="left:2264px;top:196px;width:726px;height:22px;background:#2b2b2b;"></div>
<div style="left:2264px;top:218px;width:726px;height:2px;background:#262626;"></div>
<svg style="left:2962px;top:200px;" width="16" height="14" viewBox="0 0 16 14"><path d="M1.500 1.500 L6.500 7 L1.500 12.500 M9 1.500 L14 7 L9 12.500" fill="none" stroke="#b0b0b0" stroke-width="2"/></svg>
<div style="left:2264px;top:220px;width:726px;height:55px;background:#2b2b2b;"></div>
<div style="left:2264px;top:220px;width:97px;height:55px;background:#2e2e2e;"></div>
<div style="left:2359px;top:220px;width:2px;height:55px;background:#262626;"></div>
<div style="left:2264px;top:273px;width:97px;height:2px;background:#262626;"></div>
<span style="left:2282.5px;top:234.4px;font-size:22px;line-height:22px;color:#808080;font-weight:700;letter-spacing:0.51px;">Color</span>
<div style="left:2361px;top:220px;width:141px;height:55px;background:#383838;"></div>
<span style="left:2380.5px;top:234.4px;font-size:22px;line-height:22px;color:#bbbbbb;font-weight:700;letter-spacing:0.21px;">Swatches</span>
<div style="left:2502px;top:220px;width:147px;height:55px;background:#2e2e2e;"></div>
<div style="left:2647px;top:220px;width:2px;height:55px;background:#262626;"></div>
<div style="left:2502px;top:273px;width:147px;height:2px;background:#262626;"></div>
<span style="left:2520.7px;top:234.4px;font-size:22px;line-height:22px;color:#808080;font-weight:700;letter-spacing:0.64px;">Gradients</span>
<div style="left:2649px;top:220px;width:132px;height:55px;background:#2e2e2e;"></div>
<div style="left:2779px;top:220px;width:2px;height:55px;background:#262626;"></div>
<div style="left:2649px;top:273px;width:132px;height:2px;background:#262626;"></div>
<span style="left:2669.0px;top:234.4px;font-size:22px;line-height:22px;color:#808080;font-weight:700;letter-spacing:0.56px;">Patterns</span>
<div style="left:2781px;top:273px;width:209px;height:2px;background:#262626;"></div>
<svg style="left:2960px;top:239.5px;" width="21" height="15" viewBox="0 0 21 15"><path d="M0 1 H21 M0 5.300 H21 M0 9.600 H21 M0 13.900 H21" stroke="#9a9a9a" stroke-width="1.800"/></svg>
<svg style="left:2281px;top:303px;" width="21" height="21" viewBox="0 0 21 21"><circle cx="8" cy="8" r="6.300" fill="none" stroke="#b0b0b0" stroke-width="2.600"/><path d="M12.500 12.500 L19 19" stroke="#b0b0b0" stroke-width="3.600" stroke-linecap="round"/></svg>
<div style="left:2309px;top:296.5px;width:665px;height:33px;background:#2e2e2e;border:2px solid #434343;box-sizing:border-box;border-radius:3px;"></div>
<span style="left:2315.0px;top:301.5px;font-size:24px;line-height:24px;color:#6c6c6c;letter-spacing:0.37px;">Search Swatches</span>
<div style="left:2278px;top:348px;width:697px;height:36px;background:#323232;"></div>
<div style="left:2280px;top:350px;width:32px;height:32px;background:#8c6a3e;"></div>
<div style="left:2315.9px;top:350px;width:32px;height:32px;background:#b0b0b0;"></div>
<div style="left:2351.8px;top:350px;width:32px;height:32px;background:#000000;"></div>
<div style="left:2387.7px;top:350px;width:32px;height:32px;background:#9f2418;"></div>
<div style="left:2423.6px;top:350px;width:32px;height:32px;background:#2145a6;"></div>
<div style="left:2459.5px;top:350px;width:32px;height:32px;background:#a0ad3a;"></div>
<div style="left:2495.4px;top:350px;width:32px;height:32px;background:#6f7740;"></div>
<div style="left:2531.3px;top:350px;width:32px;height:32px;background:#adad3a;"></div>
<div style="left:2567.2px;top:350px;width:32px;height:32px;background:#8d4a2e;"></div>
<div style="left:2603.1px;top:350px;width:32px;height:32px;background:#000000;"></div>
<div style="left:2639px;top:350px;width:32px;height:32px;background:#8d4a2e;"></div>
<div style="left:2674.9px;top:350px;width:32px;height:32px;background:#000000;"></div>
<div style="left:2710.8px;top:350px;width:32px;height:32px;background:#b0b0b0;"></div>
<div style="left:2746.7px;top:350px;width:32px;height:32px;background:#000000;"></div>
<div style="left:2782.6px;top:350px;width:32px;height:32px;background:#7d5d5b;"></div>
<div style="left:2264px;top:399px;width:726px;height:3px;background:#262626;"></div>
<div style="left:2266px;top:402px;width:690px;height:294px;background:#2b2b2b;"></div>
<div style="left:2956px;top:402px;width:34px;height:294px;background:#323232;"></div>
<div style="left:2962px;top:406px;width:19px;height:111px;background:#484848;border-radius:10px;"></div>
<svg style="left:2279px;top:425.5px;" width="18" height="11.16" viewBox="0 0 18 11.16"><path d="M1.500 1.500 L9 9.16 L16.5 1.500" fill="none" stroke="#b0b0b0" stroke-width="2.4"/></svg>
<svg style="left:2306px;top:419.5px;" width="29" height="21" viewBox="0 0 29 21"><path d="M1 20 V1 H11 L13 5 H28 V9" fill="none" stroke="#9c9c9c" stroke-width="2"/><rect x="0" y="9" width="29" height="12" fill="#9c9c9c"/></svg>
<span style="left:2351.0px;top:418.5px;font-size:23px;line-height:23px;color:#adadad;letter-spacing:-1.17px;">RGB</span>
<div style="left:2266px;top:459.5px;width:690px;height:60px;background:#343434;"></div>
<div style="left:2308px;top:461.5px;width:56px;height:56px;background:#a02318;"></div>
<div style="left:2368px;top:461.5px;width:56px;height:56px;background:#a9ab3a;"></div>
<div style="left:2428px;top:461.5px;width:56px;height:56px;background:#4ea832;"></div>
<div style="left:2488px;top:461.5px;width:56px;height:56px;background:#4ca5a6;"></div>
<div style="left:2548px;top:461.5px;width:56px;height:56px;background:#0000a0;"></div>
<div style="left:2608px;top:461.5px;width:56px;height:56px;background:#a023a6;"></div>
<svg style="left:2279px;top:543.5px;" width="18" height="11.16" viewBox="0 0 18 11.16"><path d="M1.500 1.500 L9 9.16 L16.5 1.500" fill="none" stroke="#b0b0b0" stroke-width="2.4"/></svg>
<svg style="left:2306px;top:537.5px;" width="29" height="21" viewBox="0 0 29 21"><path d="M1 20 V1 H11 L13 5 H28 V9" fill="none" stroke="#9c9c9c" stroke-width="2"/><rect x="0" y="9" width="29" height="12" fill="#9c9c9c"/></svg>
<span style="left:2351.0px;top:536.5px;font-size:23px;line-height:23px;color:#adadad;letter-spacing:0.68px;">CMYK</span>
<div style="left:2266px;top:577.5px;width:690px;height:60px;background:#343434;"></div>
<div style="left:2308px;top:579.5px;width:56px;height:56px;background:#952526;"></div>
<div style="left:2368px;top:579.5px;width:56px;height:56px;background:#b0a434;"></div>
<div style="left:2428px;top:579.5px;width:56px;height:56px;background:#00713f;"></div>
<div style="left:2488px;top:579.5px;width:56px;height:56px;background:#0073a4;"></div>
<div style="left:2548px;top:579.5px;width:56px;height:56px;background:#201f63;"></div>
<div style="left:2608px;top:579.5px;width:56px;height:56px;background:#991c60;"></div>
<svg style="left:2284px;top:656.5px;" width="11" height="20" viewBox="0 0 11 20"><path d="M1.500 1.500 L9 10 L1.500 18.5" fill="none" stroke="#a8a8a8" stroke-width="2.2"/></svg>
<svg style="left:2306px;top:655.5px;" width="29" height="21" viewBox="0 0 29 21"><path d="M0 2 Q0 0 2 0 H10 L13 3 H27 Q29 3 29 5 V19 Q29 21 27 21 H2 Q0 21 0 19Z" fill="#9c9c9c"/></svg>
<span style="left:2351.0px;top:654.5px;font-size:23px;line-height:23px;color:#adadad;letter-spacing:1.09px;">Szürkeárnyalatos</span>
<div style="left:2264px;top:696px;width:726px;height:3px;background:#262626;"></div>
<svg style="left:2765px;top:718px;" width="29" height="21" viewBox="0 0 29 21"><path d="M0 2 Q0 0 2 0 H10 L13 3 H27 Q29 3 29 5 V19 Q29 21 27 21 H2 Q0 21 0 19Z" fill="#9c9c9c"/></svg>
<svg style="left:2833px;top:716px;" width="26" height="26" viewBox="0 0 26 26"><rect x="1.200" y="1.200" width="23.600" height="23.600" fill="none" stroke="#a0a0a0" stroke-width="2.400"/><path d="M13 6.500 V19.500 M6.500 13 H19.500" stroke="#a0a0a0" stroke-width="2.400"/></svg>
<svg style="left:2900px;top:714px;" width="24" height="28" viewBox="0 0 24 28"><path d="M0 5 H24 M8 4.500 V1 H16 V4.500" fill="none" stroke="#666666" stroke-width="2.200"/><path d="M3 8 H21 V26 Q21 28 19 28 H5 Q3 28 3 26Z" fill="none" stroke="#666666" stroke-width="2.200"/><path d="M8.500 10 V25 M12 10 V25 M15.500 10 V25" stroke="#666666" stroke-width="1.800"/></svg>
<div style="left:2264px;top:758px;width:726px;height:5px;background:#262626;"></div>
<div style="left:2264px;top:763px;width:726px;height:56px;background:#2b2b2b;"></div>
<div style="left:2264px;top:763px;width:152px;height:56px;background:#383838;"></div>
<span style="left:2282.5px;top:778.9px;font-size:22px;line-height:22px;color:#bbbbbb;font-weight:700;letter-spacing:0.63px;">Properties</span>
<div style="left:2416px;top:763px;width:181px;height:56px;background:#2e2e2e;"></div>
<div style="left:2595px;top:763px;width:2px;height:56px;background:#262626;"></div>
<div style="left:2416px;top:817px;width:181px;height:2px;background:#262626;"></div>
<span style="left:2434.0px;top:778.9px;font-size:22px;line-height:22px;color:#808080;font-weight:700;letter-spacing:0.93px;">Adjustments</span>
<div style="left:2597px;top:763px;width:138px;height:56px;background:#2e2e2e;"></div>
<div style="left:2733px;top:763px;width:2px;height:56px;background:#262626;"></div>
<div style="left:2597px;top:817px;width:138px;height:2px;background:#262626;"></div>
<span style="left:2616.5px;top:778.9px;font-size:22px;line-height:22px;color:#808080;font-weight:700;letter-spacing:0.70px;">Libraries</span>
<div style="left:2735px;top:817px;width:255px;height:2px;background:#262626;"></div>
<svg style="left:2960px;top:783px;" width="21" height="15" viewBox="0 0 21 15"><path d="M0 1 H21 M0 5.300 H21 M0 9.600 H21 M0 13.900 H21" stroke="#9a9a9a" stroke-width="1.800"/></svg>
<div style="left:2284.5px;top:831px;width:47px;height:46px;background:#262626;border:1.500px solid #474747;box-sizing:border-box;border-radius:5px;"></div>
<span style="left:2296.3px;top:836.4px;font-size:35px;line-height:35px;color:#b4b4b4;font-weight:700;font-family:'Liberation Serif',serif;">T</span>
<span style="left:2341.0px;top:844.7px;font-size:24px;line-height:24px;color:#a8a8a8;letter-spacing:0.36px;">Type Layer</span>
<div style="left:2264px;top:886px;width:726px;height:3px;background:#262626;"></div>
<div style="left:2961px;top:889px;width:29px;height:307px;background:#323232;"></div>
<div style="left:2966px;top:894px;width:20px;height:49px;background:#484848;border-radius:10px;"></div>
<svg style="left:2281px;top:911px;" width="11.55" height="21" viewBox="0 0 11.55 21"><path d="M1.500 1.500 L9.55 10.5 L1.500 19.5" fill="none" stroke="#b0b0b0" stroke-width="2.2"/></svg>
<span style="left:2306.5px;top:909.7px;font-size:24px;line-height:24px;color:#adadad;font-weight:700;letter-spacing:0.70px;">Transform</span>
<svg style="left:2797px;top:902px;" width="31" height="29" viewBox="0 0 31 29"><path d="M9 13 A10.500 10.500 0 1 1 17 22" fill="none" stroke="#8a8a8a" stroke-width="2.400"/><path d="M1 8 L13 10 L6 18Z" fill="#8a8a8a"/><path d="M2 27 H29" stroke="#8a8a8a" stroke-width="2.200"/></svg>
<div style="left:2264px;top:953px;width:697px;height:3px;background:#262626;"></div>
<svg style="left:2278px;top:985px;" width="18" height="11.16" viewBox="0 0 18 11.16"><path d="M1.500 1.500 L9 9.16 L16.5 1.500" fill="none" stroke="#b0b0b0" stroke-width="2.4"/></svg>
<span style="left:2306.5px;top:977.7px;font-size:24px;line-height:24px;color:#adadad;font-weight:700;letter-spacing:0.87px;">Character</span>
<div style="left:2281px;top:1025px;width:445px;height:40px;background:#2e2e2e;border:2px solid #474747;box-sizing:border-box;border-radius:5px;"></div>
<div style="left:2695px;top:1027px;width:2px;height:36px;background:#474747;"></div>
<svg style="left:2703px;top:1041.5px;" width="16" height="9.92" viewBox="0 0 16 9.92"><path d="M1.500 1.500 L8 7.92 L14.5 1.500" fill="none" stroke="#b0b0b0" stroke-width="2.2"/></svg>
<span style="left:2289.0px;top:1033.2px;font-size:24px;line-height:24px;color:#adadad;letter-spacing:0.43px;">Lato</span>
<div style="left:2281px;top:1078px;width:545px;height:40px;background:#2e2e2e;border:2px solid #474747;box-sizing:border-box;border-radius:5px;"></div>
<div style="left:2795px;top:1080px;width:2px;height:36px;background:#474747;"></div>
<svg style="left:2803px;top:1094.5px;" width="16" height="9.92" viewBox="0 0 16 9.92"><path d="M1.500 1.500 L8 7.92 L14.5 1.500" fill="none" stroke="#b0b0b0" stroke-width="2.2"/></svg>
<span style="left:2289.0px;top:1086.2px;font-size:24px;line-height:24px;color:#adadad;letter-spacing:0.58px;">Black</span>
<span style="left:2284.0px;top:1155.2px;font-size:21px;line-height:21px;color:#a0a0a0;font-weight:700;font-family:'Liberation Serif',serif;">T</span>
<span style="left:2294.5px;top:1140.8px;font-size:38px;line-height:38px;color:#a0a0a0;font-weight:700;font-family:'Liberation Serif',serif;">T</span>
<div style="left:2328px;top:1137px;width:149px;height:40px;background:#2e2e2e;border:2px solid #474747;box-sizing:border-box;border-radius:5px;"></div>
<div style="left:2446px;top:1139px;width:2px;height:36px;background:#474747;"></div>
<svg style="left:2454px;top:1153.5px;" width="16" height="9.92" viewBox="0 0 16 9.92"><path d="M1.500 1.500 L8 7.92 L14.5 1.500" fill="none" stroke="#b0b0b0" stroke-width="2.2"/></svg>
<span style="left:2336.0px;top:1145.2px;font-size:24px;line-height:24px;color:#adadad;letter-spacing:0.45px;">241 pt</span>
<svg style="left:2632px;top:1141px;" width="34" height="34" viewBox="0 0 34 34"><path d="M4 16 V32 M1 19 L4 15 L7 19 M1 29 L4 33 L7 29" fill="none" stroke="#b0b0b0" stroke-width="1.800"/><path d="M13 17 H34 M13 33 H34" stroke="#b0b0b0" stroke-width="1.800"/></svg>
<span style="left:2649.8px;top:1142.1px;font-size:17px;line-height:17px;color:#b0b0b0;">A</span>
<span style="left:2649.8px;top:1158.1px;font-size:17px;line-height:17px;color:#b0b0b0;">A</span>
<div style="left:2678px;top:1137px;width:148px;height:40px;background:#2e2e2e;border:2px solid #474747;box-sizing:border-box;border-radius:5px;"></div>
<div style="left:2795px;top:1139px;width:2px;height:36px;background:#474747;"></div>
<svg style="left:2803px;top:1153.5px;" width="16" height="9.92" viewBox="0 0 16 9.92"><path d="M1.500 1.500 L8 7.92 L14.5 1.500" fill="none" stroke="#b0b0b0" stroke-width="2.2"/></svg>
<span style="left:2686.0px;top:1145.2px;font-size:24px;line-height:24px;color:#adadad;letter-spacing:1.15px;">20 pt</span>
<div style="left:2264px;top:1190px;width:697px;height:6px;overflow:hidden;">
<div style="left:64px;top:1px;width:149px;height:40px;background:#2e2e2e;border:2px solid #474747;box-sizing:border-box;border-radius:5px;"></div>
<div style="left:414px;top:1px;width:148px;height:40px;background:#2e2e2e;border:2px solid #474747;box-sizing:border-box;border-radius:5px;"></div>
<div style="left:182px;top:1px;width:2px;height:7px;background:#474747;"></div>
<div style="left:531px;top:1px;width:2px;height:7px;background:#474747;"></div>
<div style="left:369px;top:3px;width:35px;height:2px;background:#b0b0b0;"></div>
</div>
<div style="left:2264px;top:1254px;width:726px;height:6px;background:#262626;"></div>
<div style="left:2264px;top:1260px;width:726px;height:55px;background:#2b2b2b;"></div>
<div style="left:2264px;top:1260px;width:110px;height:55px;background:#383838;"></div>
<span style="left:2282.5px;top:1275.4px;font-size:22px;line-height:22px;color:#bbbbbb;font-weight:700;letter-spacing:0.11px;">Layers</span>
<div style="left:2374px;top:1260px;width:141px;height:55px;background:#2e2e2e;"></div>
<div style="left:2513px;top:1260px;width:2px;height:55px;background:#262626;"></div>
<div style="left:2374px;top:1313px;width:141px;height:2px;background:#262626;"></div>
<span style="left:2392.0px;top:1275.4px;font-size:22px;line-height:22px;color:#808080;font-weight:700;letter-spacing:0.50px;">Channels</span>
<div style="left:2515px;top:1260px;width:100px;height:55px;background:#2e2e2e;"></div>
<div style="left:2613px;top:1260px;width:2px;height:55px;background:#262626;"></div>
<div style="left:2515px;top:1313px;width:100px;height:2px;background:#262626;"></div>
<span style="left:2534.0px;top:1275.4px;font-size:22px;line-height:22px;color:#808080;font-weight:700;letter-spacing:0.14px;">Paths</span>
<div style="left:2615px;top:1313px;width:375px;height:2px;background:#262626;"></div>
<svg style="left:2960px;top:1279.5px;" width="21" height="15" viewBox="0 0 21 15"><path d="M0 1 H21 M0 5.300 H21 M0 9.600 H21 M0 13.900 H21" stroke="#9a9a9a" stroke-width="1.800"/></svg>
<div style="left:2271px;top:1333px;width:199px;height:41px;background:#2e2e2e;border:2px solid #474747;box-sizing:border-box;border-radius:5px;"></div>
<svg style="left:2288px;top:1344px;" width="20" height="20" viewBox="0 0 20 20"><circle cx="7.500" cy="7.500" r="5.800" fill="none" stroke="#aaaaaa" stroke-width="2.200"/><path d="M12 12 L18 18" stroke="#aaaaaa" stroke-width="3" stroke-linecap="round"/></svg>
<span style="left:2314.0px;top:1341.5px;font-size:26px;line-height:26px;color:#b6b6b6;letter-spacing:-0.68px;">Kind</span>
<svg style="left:2447px;top:1350px;" width="16" height="9.92" viewBox="0 0 16 9.92"><path d="M1.500 1.500 L8 7.92 L14.5 1.500" fill="none" stroke="#b0b0b0" stroke-width="2.2"/></svg>
<svg style="left:2499px;top:1341px;" width="30" height="25" viewBox="0 0 30 25"><rect x="1.200" y="1.200" width="27.600" height="22.600" rx="2" fill="none" stroke="#a4a4a4" stroke-width="2.400"/><path d="M5 20 L12 10 L17 16 L20 13 L25 20Z" fill="#a4a4a4"/><circle cx="20" cy="8" r="2.200" fill="#a4a4a4"/></svg>
<svg style="left:2548px;top:1341px;" width="26" height="26" viewBox="0 0 26 26"><circle cx="13" cy="13" r="11.500" fill="none" stroke="#a4a4a4" stroke-width="2.400"/><path d="M21.500 4.500 A12 12 0 0 1 4.500 21.500Z" fill="#a4a4a4"/></svg>
<span style="left:2597.3px;top:1335.9px;font-size:35px;line-height:35px;color:#a4a4a4;font-weight:700;font-family:'Liberation Serif',serif;">T</span>
<svg style="left:2644px;top:1340px;" width="28" height="28" viewBox="0 0 28 28"><rect x="4" y="4" width="20" height="20" fill="none" stroke="#a4a4a4" stroke-width="2.400"/><rect x="1" y="1" width="7" height="7" fill="#383838" stroke="#a4a4a4" stroke-width="2"/><rect x="1" y="20" width="7" height="7" fill="#383838" stroke="#a4a4a4" stroke-width="2"/><rect x="20" y="1" width="7" height="7" fill="#383838" stroke="#a4a4a4" stroke-width="2"/><rect x="20" y="20" width="7" height="7" fill="#383838" stroke="#a4a4a4" stroke-width="2"/></svg>
<svg style="left:2694px;top:1340px;" width="26" height="28" viewBox="0 0 26 28"><path d="M9 1.200 H18 L24.500 8 V20 H9Z" fill="none" stroke="#a4a4a4" stroke-width="2.400"/><path d="M17 1 V9 H25" fill="none" stroke="#a4a4a4" stroke-width="2"/><rect x="1" y="14" width="13" height="13" fill="#a4a4a4"/></svg>
<div style="left:2750px;top:1336px;width:18px;height:35px;background:#2e2e2e;border:1.500px solid #4a4a4a;box-sizing:border-box;border-radius:9px;"></div>
<div style="left:2751.5px;top:1336.5px;width:15px;height:15px;background:#b0b0b0;border-radius:50%;"></div>
<div style="left:2264px;top:1383px;width:726px;height:2px;background:#262626;"></div>
<div style="left:2271px;top:1393px;width:270px;height:41px;background:#2e2e2e;border:2px solid #474747;box-sizing:border-box;border-radius:5px;"></div>
<span style="left:2287.0px;top:1400.0px;font-size:26px;line-height:26px;color:#adadad;letter-spacing:-0.76px;">Normal</span>
<svg style="left:2519px;top:1410px;" width="16" height="9.92" viewBox="0 0 16 9.92"><path d="M1.500 1.500 L8 7.92 L14.5 1.500" fill="none" stroke="#b0b0b0" stroke-width="2.2"/></svg>
<span style="left:2549.0px;top:1402.3px;font-size:24.5px;line-height:24.5px;color:#a4a4a4;letter-spacing:0.30px;">Opacity:</span>
<div style="left:2648px;top:1393px;width:117px;height:41px;background:#2e2e2e;border:2px solid #474747;box-sizing:border-box;border-radius:5px;"></div>
<div style="left:2734px;top:1395px;width:2px;height:37px;background:#474747;"></div>
<svg style="left:2742px;top:1410px;" width="16" height="9.92" viewBox="0 0 16 9.92"><path d="M1.500 1.500 L8 7.92 L14.5 1.500" fill="none" stroke="#b0b0b0" stroke-width="2.2"/></svg>
<span style="left:2656.0px;top:1401.3px;font-size:24.5px;line-height:24.5px;color:#adadad;letter-spacing:-0.22px;">100%</span>
<div style="left:2264px;top:1442px;width:726px;height:2px;background:#262626;"></div>
<span style="left:2275.0px;top:1462.3px;font-size:24.5px;line-height:24.5px;color:#a4a4a4;letter-spacing:-0.14px;">Lock:</span>
<svg style="left:2345px;top:1461px;" width="27" height="27" viewBox="0 0 27 27"><rect x="0" y="0" width="27" height="27" fill="#4c4c4c"/><path d="M0 0 H9 V9 H0Z M18 0 H27 V9 H18Z M9 9 H18 V18 H9Z M0 18 H9 V27 H0Z M18 18 H27 V27 H18Z" fill="#707070"/><rect x="0.500" y="0.500" width="26" height="26" fill="none" stroke="#6a6a6a"/></svg>
<svg style="left:2389px;top:1458px;" width="32" height="34" viewBox="0 0 32 34"><path d="M30 1 Q32 2 31 4 L19 19 L15 16Z" fill="#6e6e6e"/><path d="M13 18 L17 21 Q17 29 3 32 Q1 32 3 30 Q6 27 6 23 Q8 18 13 18Z" fill="#6e6e6e"/></svg>
<svg style="left:2431px;top:1460px;" width="30" height="30" viewBox="0 0 30 30"><g stroke="#a4a4a4" stroke-width="2.200" fill="none"><path d="M15 4 V26 M4 15 H26"/></g><path fill="#a4a4a4" d="M15 0 L20 6.500 H10Z M15 30 L10 23.500 H20Z M0 15 L6.500 10 V20Z M30 15 L23.500 10 V20Z"/></svg>
<svg style="left:2475px;top:1459px;" width="32" height="32" viewBox="0 0 32 32"><path d="M5 0 V27 H32 M0 5 H27 V32" fill="none" stroke="#a4a4a4" stroke-width="2" stroke-dasharray="3 2.500"/><path d="M5 5 H20 L27 12 V27 H5Z" fill="none" stroke="#a4a4a4" stroke-width="2.200"/></svg>
<svg style="left:2523px;top:1458px;" width="25" height="32" viewBox="0 0 25 32"><path d="M6 14 V9 A6.500 6.500 0 0 1 19 9 V14" fill="none" stroke="#a4a4a4" stroke-width="3"/><rect x="0" y="13" width="25" height="18" rx="2" fill="#a4a4a4"/><circle cx="12.500" cy="22" r="2.600" fill="#383838"/></svg>
<span style="left:2605.0px;top:1462.3px;font-size:24.5px;line-height:24.5px;color:#a4a4a4;letter-spacing:-0.53px;">Fill:</span>
<div style="left:2648px;top:1453px;width:117px;height:41px;background:#2e2e2e;border:2px solid #474747;box-sizing:border-box;border-radius:5px;"></div>
<div style="left:2734px;top:1455px;width:2px;height:37px;background:#474747;"></div>
<svg style="left:2742px;top:1470px;" width="16" height="9.92" viewBox="0 0 16 9.92"><path d="M1.500 1.500 L8 7.92 L14.5 1.500" fill="none" stroke="#b0b0b0" stroke-width="2.2"/></svg>
<span style="left:2656.0px;top:1461.3px;font-size:24.5px;line-height:24.5px;color:#adadad;letter-spacing:-0.22px;">100%</span>
<div style="left:2264px;top:1506px;width:726px;height:2px;background:#262626;"></div>
<div style="left:2264px;top:1508px;width:697px;height:366px;background:#343434;"></div>
<div style="left:2961px;top:1508px;width:29px;height:367px;background:#313131;"></div>
<div style="left:2323px;top:1508px;width:2px;height:322px;background:#262626;"></div>
<div style="left:2325px;top:1508px;width:613px;height:62px;background:#484848;"></div>
<svg style="left:2281.5px;top:1530.5px;" width="26" height="17" viewBox="0 0 26 17"><path d="M0 8.500 Q13 -6 26 8.500 Q13 23 0 8.500Z" fill="#b0b0b0"/><circle cx="13" cy="8.500" r="5.800" fill="#343434"/><circle cx="13" cy="8.500" r="3" fill="#b0b0b0"/><circle cx="11" cy="6.500" r="1.600" fill="#343434"/></svg>
<svg style="left:2328px;top:1513px;" width="72" height="52" viewBox="0 0 72 52"><path d="M1 16 V1 H25 M47 1 H71 V16 M71 36 V51 H47 M25 51 H1 V36" fill="none" stroke="#adadad" stroke-width="2"/></svg>
<span style="left:2354.3px;top:1525.5px;font-size:29px;line-height:29px;color:#adadad;font-weight:700;font-family:'Liberation Serif',serif;">T</span>
<span style="left:2412.0px;top:1527.1px;font-size:23.5px;line-height:23.5px;color:#b6b6b6;letter-spacing:-0.02px;">TEXT</span>
<span style="left:2908.0px;top:1526.0px;font-size:26px;line-height:26px;color:#9c9c9c;font-style:italic;">fx</span>
<svg style="left:2943px;top:1534px;" width="14" height="9" viewBox="0 0 14 9"><path d="M1.500 7.500 L7 2 L12.500 7.500" fill="none" stroke="#aaaaaa" stroke-width="2.200"/></svg>
<svg style="left:2363px;top:1582.5px;" width="26" height="17" viewBox="0 0 26 17"><path d="M0 8.500 Q13 -6 26 8.500 Q13 23 0 8.500Z" fill="#b0b0b0"/><circle cx="13" cy="8.500" r="5.800" fill="#343434"/><circle cx="13" cy="8.500" r="3" fill="#b0b0b0"/><circle cx="11" cy="6.500" r="1.600" fill="#343434"/></svg>
<span style="left:2398.0px;top:1576.6px;font-size:23.5px;line-height:23.5px;color:#aaaaaa;letter-spacing:1.10px;">Effects</span>
<svg style="left:2397.5px;top:1626.5px;" width="26" height="17" viewBox="0 0 26 17"><path d="M0 8.500 Q13 -6 26 8.500 Q13 23 0 8.500Z" fill="#b0b0b0"/><circle cx="13" cy="8.500" r="5.800" fill="#343434"/><circle cx="13" cy="8.500" r="3" fill="#b0b0b0"/><circle cx="11" cy="6.500" r="1.600" fill="#343434"/></svg>
<span style="left:2432.0px;top:1620.6px;font-size:23.5px;line-height:23.5px;color:#aaaaaa;letter-spacing:0.82px;">Stroke</span>
<svg style="left:2397.5px;top:1670px;" width="26" height="17" viewBox="0 0 26 17"><path d="M0 8.500 Q13 -6 26 8.500 Q13 23 0 8.500Z" fill="#b0b0b0"/><circle cx="13" cy="8.500" r="5.800" fill="#343434"/><circle cx="13" cy="8.500" r="3" fill="#b0b0b0"/><circle cx="11" cy="6.500" r="1.600" fill="#343434"/></svg>
<span style="left:2432.0px;top:1664.6px;font-size:23.5px;line-height:23.5px;color:#aaaaaa;letter-spacing:0.76px;">Drop Shadow</span>
<div style="left:2264px;top:1700px;width:697px;height:2px;background:#262626;"></div>
<svg style="left:2281.5px;top:1723.5px;" width="26" height="17" viewBox="0 0 26 17"><path d="M0 8.500 Q13 -6 26 8.500 Q13 23 0 8.500Z" fill="#b0b0b0"/><circle cx="13" cy="8.500" r="5.800" fill="#343434"/><circle cx="13" cy="8.500" r="3" fill="#b0b0b0"/><circle cx="11" cy="6.500" r="1.600" fill="#343434"/></svg>
<div style="left:2332.5px;top:1711px;width:63px;height:42px;background:#a0241a;border:1.500px solid #222;box-sizing:border-box;"></div>
<span style="left:2412.0px;top:1720.7px;font-size:24px;line-height:24px;color:#b6b6b6;letter-spacing:-0.18px;">Layer 1</span>
<div style="left:2264px;top:1757px;width:697px;height:2px;background:#262626;"></div>
<div style="left:2264px;top:1874px;width:726px;height:2px;background:#262626;"></div>
<svg style="left:2519px;top:1893px;" width="33" height="20" viewBox="0 0 33 20"><path d="M13 3 H8 A7 7 0 0 0 8 17 H13 M20 3 H25 A7 7 0 0 1 25 17 H20 M9 10 H24" fill="none" stroke="#6a6a6a" stroke-width="2.800"/></svg>
<span style="left:2586.0px;top:1885.9px;font-size:32px;line-height:32px;color:#a2a2a2;font-style:italic;">fx</span>
<svg style="left:2615px;top:1917px;" width="9" height="5" viewBox="0 0 9 5"><path d="M0 0 H8 L4 4.500Z" fill="#a2a2a2"/></svg>
<svg style="left:2648px;top:1892px;" width="30" height="22" viewBox="0 0 30 22"><rect x="0" y="0" width="30" height="22" rx="2" fill="#a2a2a2"/><circle cx="15" cy="11" r="6.500" fill="#383838"/></svg>
<svg style="left:2711px;top:1891px;" width="27" height="27" viewBox="0 0 27 27"><circle cx="13.500" cy="13.500" r="12" fill="none" stroke="#a2a2a2" stroke-width="2.400"/><path d="M22.500 5 A12.500 12.500 0 0 1 5 22.500Z" fill="#a2a2a2"/></svg>
<svg style="left:2739px;top:1917px;" width="9" height="5" viewBox="0 0 9 5"><path d="M0 0 H8 L4 4.500Z" fill="#a2a2a2"/></svg>
<svg style="left:2773px;top:1893px;" width="29" height="21" viewBox="0 0 29 21"><path d="M0 2 Q0 0 2 0 H10 L13 3 H27 Q29 3 29 5 V19 Q29 21 27 21 H2 Q0 21 0 19Z" fill="#a2a2a2"/></svg>
<svg style="left:2837px;top:1891px;" width="26" height="26" viewBox="0 0 26 26"><rect x="1.200" y="1.200" width="23.600" height="23.600" fill="none" stroke="#a2a2a2" stroke-width="2.400"/><path d="M13 6.500 V19.500 M6.500 13 H19.500" stroke="#a2a2a2" stroke-width="2.400"/></svg>
<svg style="left:2900px;top:1889px;" width="24" height="28" viewBox="0 0 24 28"><path d="M0 5 H24 M8 4.500 V1 H16 V4.500" fill="none" stroke="#a2a2a2" stroke-width="2.200"/><path d="M3 8 H21 V26 Q21 28 19 28 H5 Q3 28 3 26Z" fill="none" stroke="#a2a2a2" stroke-width="2.200"/><path d="M8.500 10 V25 M12 10 V25 M15.500 10 V25" stroke="#a2a2a2" stroke-width="1.800"/></svg>
<div style="left:2233px;top:1765px;width:25px;height:58px;background:#4b4b4b;"></div>
<div style="left:2258px;top:1765px;width:6px;height:58px;background:#3c3c3c;"></div>
<div style="left:2264px;top:1765px;width:689px;height:58px;background:#555555;"></div>
<div style="left:2323px;top:1765px;width:2px;height:58px;background:#3e3e3e;"></div>
<div style="left:2281px;top:1783px;width:24px;height:24.5px;background:#4a4a4a;border:1.500px solid #424242;box-sizing:border-box;"></div>
<div style="left:2332px;top:1772px;width:64px;height:44px;background:#303030;"></div>
<svg style="left:2334px;top:1774px;" width="60" height="40" viewBox="0 0 60 40"><defs><linearGradient id="lg0" x1="0" y1="0" x2="0" y2="1"><stop offset="0" stop-color="#9c9c5c"/><stop offset=".16" stop-color="#b4ae70"/><stop offset=".2" stop-color="#dccb98"/><stop offset=".3" stop-color="#e2d09e"/><stop offset=".36" stop-color="#a9b060"/><stop offset=".5" stop-color="#8fa04a"/><stop offset=".72" stop-color="#a3ac58"/><stop offset="1" stop-color="#58682a"/></linearGradient><filter id="nz" x="0" y="0" width="100%" height="100%"><feTurbulence type="fractalNoise" baseFrequency=".4" numOctaves="2" seed="7"/><feColorMatrix values="0 0 0 0 .16  0 0 0 0 .22  0 0 0 0 .06  4.500 0 0 0 -1.650"/></filter><filter id="nz2" x="0" y="0" width="100%" height="100%"><feTurbulence type="fractalNoise" baseFrequency=".45" numOctaves="2" seed="23"/><feColorMatrix values="0 0 0 0 .86  0 0 0 0 .84  0 0 0 0 .5  0 4.500 0 0 -2.100"/></filter></defs><rect width="60" height="40" fill="url(#lg0)"/><rect y="12" width="60" height="28" filter="url(#nz)" opacity=".75"/><rect y="14" width="60" height="26" filter="url(#nz2)" opacity=".55"/><rect width="60" height="9" filter="url(#nz)" opacity=".35"/><path d="M0 12 L26 9.500 L60 8 L60 12 L40 14 L0 15Z" fill="#9aa858" opacity=".8"/><path d="M5 15 L15 13.500 L24 14.500 L35 16.500 M45 10 L53 9.500" stroke="#2e3418" stroke-width="2.200" fill="none"/><path d="M36 17 L60 20.500" stroke="#2a3016" stroke-width="2" stroke-dasharray="1.500 3.500" fill="none"/><rect x="19" y="13" width="6" height="2" fill="#8d8f9a"/></svg>
<span style="left:2413.0px;top:1781.7px;font-size:24px;line-height:24px;color:#f0f0f0;letter-spacing:0.16px;-webkit-text-stroke:.35px;">Layer 0</span>
<div style="left:1px;top:1932px;width:2989px;height:2px;background:#262626;"></div>
<div style="left:2226px;top:1758px;width:734px;height:71.7px;background:transparent;border:7px solid #e0673a;box-sizing:border-box;"></div>
<div style="left:1889px;top:1793px;width:381px;height:8px;background:#e0673a;"></div>
<svg style="left:2267.5px;top:1789px;" width="18.5" height="16" viewBox="0 0 18.5 16"><path d="M0 0 L18.500 8 L0 16Z" fill="#e0673a"/></svg>
<div style="left:260px;top:68px;width:630px;height:1232px;background:radial-gradient(ellipse 130px 150px at 96% 100%,rgba(190,200,200,.16),transparent),linear-gradient(180deg,#747474 0.00%,#727272 10.71%,#6e6e6e 18.83%,#6a6868 24.51%,#726b6b 26.95%,#7c7070 29.38%,#8b7978 32.63%,#978281 35.71%,#998584 43.18%,#9a8685 51.30%,#9a8685 100.00%);border-radius:0 0 13px 13px;border-top-left-radius:13px;border-top-right-radius:13px;box-shadow:0 14px 30px -8px rgba(0,0,0,.4),0 0 10px rgba(0,0,0,.12),0 0 0 1px rgba(0,0,0,.3),inset 0 0 0 1.500px rgba(255,255,255,.13);"></div>
<span style="left:306.5px;top:82.4px;font-size:24px;line-height:24px;color:#1c1a1a;letter-spacing:1.18px;-webkit-text-stroke:.55px;">New...</span>
<span style="left:790.1px;top:81.3px;font-size:25px;line-height:25px;color:#1c1a1a;font-family:'DejaVu Sans','Liberation Sans',sans-serif;-webkit-text-stroke:.55px;">⌘</span>
<span style="left:819.5px;top:81.5px;font-size:25px;line-height:25px;color:#1c1a1a;-webkit-text-stroke:.55px;">N</span>
<span style="left:306.5px;top:118.5px;font-size:24px;line-height:24px;color:#1c1a1a;letter-spacing:1.21px;-webkit-text-stroke:.55px;">Open...</span>
<span style="left:790.1px;top:117.4px;font-size:25px;line-height:25px;color:#1c1a1a;font-family:'DejaVu Sans','Liberation Sans',sans-serif;-webkit-text-stroke:.55px;">⌘</span>
<span style="left:819.5px;top:117.6px;font-size:25px;line-height:25px;color:#1c1a1a;-webkit-text-stroke:.55px;">O</span>
<span style="left:306.5px;top:154.6px;font-size:24px;line-height:24px;color:#1c1a1a;letter-spacing:1.29px;-webkit-text-stroke:.55px;">Browse in Bridge...</span>
<span style="left:790.1px;top:153.5px;font-size:25px;line-height:25px;color:#1c1a1a;font-family:'DejaVu Sans','Liberation Sans',sans-serif;-webkit-text-stroke:.55px;">⌘</span>
<span style="left:760.6px;top:153.1px;font-size:25px;line-height:25px;color:#1c1a1a;font-family:'DejaVu Sans','Liberation Sans',sans-serif;-webkit-text-stroke:.55px;transform:scale(.84,1.200);transform-origin:50% 80%;">⌥</span>
<span style="left:819.5px;top:153.7px;font-size:25px;line-height:25px;color:#1c1a1a;-webkit-text-stroke:.55px;">O</span>
<span style="left:306.5px;top:190.7px;font-size:24px;line-height:24px;color:#1c1a1a;letter-spacing:1.42px;-webkit-text-stroke:.55px;">Open as Smart Object...</span>
<span style="left:306.5px;top:226.8px;font-size:24px;line-height:24px;color:#1c1a1a;letter-spacing:1.44px;-webkit-text-stroke:.55px;">Open Recent</span>
<svg style="left:846px;top:230.8px;" width="10" height="18" viewBox="0 0 10 18"><path d="M2 2 L8 9 L2 16" fill="none" stroke="#1c1a1a" stroke-width="2.400"/></svg>
<div style="left:288px;top:267.95px;width:573px;height:2px;background:rgba(0,0,0,.13);"></div>
<span style="left:306.5px;top:284.6px;font-size:24px;line-height:24px;color:#1c1a1a;letter-spacing:1.41px;-webkit-text-stroke:.55px;">Close</span>
<span style="left:790.1px;top:283.5px;font-size:25px;line-height:25px;color:#1c1a1a;font-family:'DejaVu Sans','Liberation Sans',sans-serif;-webkit-text-stroke:.55px;">⌘</span>
<span style="left:819.5px;top:283.7px;font-size:25px;line-height:25px;color:#1c1a1a;-webkit-text-stroke:.55px;">W</span>
<span style="left:306.5px;top:320.7px;font-size:24px;line-height:24px;color:#1c1a1a;letter-spacing:1.30px;-webkit-text-stroke:.55px;">Close All</span>
<span style="left:790.1px;top:319.6px;font-size:25px;line-height:25px;color:#1c1a1a;font-family:'DejaVu Sans','Liberation Sans',sans-serif;-webkit-text-stroke:.55px;">⌘</span>
<span style="left:760.6px;top:319.2px;font-size:25px;line-height:25px;color:#1c1a1a;font-family:'DejaVu Sans','Liberation Sans',sans-serif;-webkit-text-stroke:.55px;transform:scale(.84,1.200);transform-origin:50% 80%;">⌥</span>
<span style="left:819.5px;top:319.8px;font-size:25px;line-height:25px;color:#1c1a1a;-webkit-text-stroke:.55px;">W</span>
<span style="left:306.5px;top:356.8px;font-size:24px;line-height:24px;color:rgba(0,0,0,.2);letter-spacing:1.43px;-webkit-text-stroke:.55px;">Close Others</span>
<span style="left:790.1px;top:355.7px;font-size:25px;line-height:25px;color:rgba(0,0,0,.2);font-family:'DejaVu Sans','Liberation Sans',sans-serif;-webkit-text-stroke:.55px;">⌘</span>
<span style="left:760.6px;top:355.3px;font-size:25px;line-height:25px;color:rgba(0,0,0,.2);font-family:'DejaVu Sans','Liberation Sans',sans-serif;-webkit-text-stroke:.55px;transform:scale(.84,1.200);transform-origin:50% 80%;">⌥</span>
<span style="left:819.5px;top:355.9px;font-size:25px;line-height:25px;color:rgba(0,0,0,.2);-webkit-text-stroke:.55px;">P</span>
<span style="left:306.5px;top:392.9px;font-size:24px;line-height:24px;color:#1c1a1a;letter-spacing:1.33px;-webkit-text-stroke:.55px;">Close and Go to Bridge...</span>
<span style="left:790.1px;top:391.8px;font-size:25px;line-height:25px;color:#1c1a1a;font-family:'DejaVu Sans','Liberation Sans',sans-serif;-webkit-text-stroke:.55px;">⌘</span>
<span style="left:764.5px;top:392.3px;font-size:25px;line-height:25px;color:#1c1a1a;font-weight:700;font-family:'DejaVu Sans','Liberation Sans',sans-serif;transform:scale(1.500,1);">⇧</span>
<span style="left:819.5px;top:392.0px;font-size:25px;line-height:25px;color:#1c1a1a;-webkit-text-stroke:.55px;">W</span>
<span style="left:306.5px;top:429.0px;font-size:24px;line-height:24px;color:#1c1a1a;letter-spacing:0.63px;-webkit-text-stroke:.55px;">Save</span>
<span style="left:790.1px;top:427.9px;font-size:25px;line-height:25px;color:#1c1a1a;font-family:'DejaVu Sans','Liberation Sans',sans-serif;-webkit-text-stroke:.55px;">⌘</span>
<span style="left:819.5px;top:428.1px;font-size:25px;line-height:25px;color:#1c1a1a;-webkit-text-stroke:.55px;">S</span>
<span style="left:306.5px;top:465.1px;font-size:24px;line-height:24px;color:#1c1a1a;letter-spacing:0.99px;-webkit-text-stroke:.55px;">Save As...</span>
<span style="left:790.1px;top:464.0px;font-size:25px;line-height:25px;color:#1c1a1a;font-family:'DejaVu Sans','Liberation Sans',sans-serif;-webkit-text-stroke:.55px;">⌘</span>
<span style="left:764.5px;top:464.5px;font-size:25px;line-height:25px;color:#1c1a1a;font-weight:700;font-family:'DejaVu Sans','Liberation Sans',sans-serif;transform:scale(1.500,1);">⇧</span>
<span style="left:819.5px;top:464.2px;font-size:25px;line-height:25px;color:#1c1a1a;-webkit-text-stroke:.55px;">S</span>
<span style="left:306.5px;top:501.2px;font-size:24px;line-height:24px;color:#1c1a1a;letter-spacing:0.98px;-webkit-text-stroke:.55px;">Save a Copy...</span>
<span style="left:790.1px;top:500.1px;font-size:25px;line-height:25px;color:#1c1a1a;font-family:'DejaVu Sans','Liberation Sans',sans-serif;-webkit-text-stroke:.55px;">⌘</span>
<span style="left:760.6px;top:499.7px;font-size:25px;line-height:25px;color:#1c1a1a;font-family:'DejaVu Sans','Liberation Sans',sans-serif;-webkit-text-stroke:.55px;transform:scale(.84,1.200);transform-origin:50% 80%;">⌥</span>
<span style="left:819.5px;top:500.3px;font-size:25px;line-height:25px;color:#1c1a1a;-webkit-text-stroke:.55px;">S</span>
<span style="left:306.5px;top:537.3px;font-size:24px;line-height:24px;color:#1c1a1a;letter-spacing:1.22px;-webkit-text-stroke:.55px;">Revert</span>
<div style="left:288px;top:578.45px;width:573px;height:2px;background:rgba(0,0,0,.13);"></div>
<span style="left:306.5px;top:595.1px;font-size:24px;line-height:24px;color:#1c1a1a;letter-spacing:1.21px;-webkit-text-stroke:.55px;">Invite to Edit...</span>
<span style="left:306.5px;top:631.2px;font-size:24px;line-height:24px;color:#1c1a1a;letter-spacing:1.02px;-webkit-text-stroke:.55px;">Share for Review NEW...</span>
<div style="left:268px;top:657.7px;width:611px;height:45px;background:#d9b1b0;border:7px solid #e0673a;box-sizing:border-box;"></div>
<span style="left:306.5px;top:667.3px;font-size:24px;line-height:24px;color:#1c1a1a;letter-spacing:1.67px;-webkit-text-stroke:.55px;">Export</span>
<svg style="left:846px;top:671.3px;" width="10" height="18" viewBox="0 0 10 18"><path d="M2 2 L8 9 L2 16" fill="none" stroke="#1c1a1a" stroke-width="2.400"/></svg>
<span style="left:306.5px;top:703.4px;font-size:24px;line-height:24px;color:#1c1a1a;letter-spacing:1.42px;-webkit-text-stroke:.55px;">Generate</span>
<svg style="left:846px;top:707.4px;" width="10" height="18" viewBox="0 0 10 18"><path d="M2 2 L8 9 L2 16" fill="none" stroke="#1c1a1a" stroke-width="2.400"/></svg>
<div style="left:288px;top:744.55px;width:573px;height:2px;background:rgba(0,0,0,.13);"></div>
<span style="left:306.5px;top:761.2px;font-size:24px;line-height:24px;color:#1c1a1a;letter-spacing:1.43px;-webkit-text-stroke:.55px;">Search Adobe Stock...</span>
<span style="left:306.5px;top:797.3px;font-size:24px;line-height:24px;color:#1c1a1a;letter-spacing:1.40px;-webkit-text-stroke:.55px;">Search Adobe Express Templates...</span>
<span style="left:306.5px;top:833.4px;font-size:24px;line-height:24px;color:#1c1a1a;letter-spacing:1.36px;-webkit-text-stroke:.55px;">Place Embedded...</span>
<span style="left:306.5px;top:869.5px;font-size:24px;line-height:24px;color:#1c1a1a;letter-spacing:1.18px;-webkit-text-stroke:.55px;">Place Linked...</span>
<span style="left:306.5px;top:905.6px;font-size:24px;line-height:24px;color:rgba(0,0,0,.2);letter-spacing:1.07px;-webkit-text-stroke:.55px;">Package...</span>
<div style="left:288px;top:946.75px;width:573px;height:2px;background:rgba(0,0,0,.13);"></div>
<span style="left:306.5px;top:963.4px;font-size:24px;line-height:24px;color:#1c1a1a;letter-spacing:1.72px;-webkit-text-stroke:.55px;">Automate</span>
<svg style="left:846px;top:967.4px;" width="10" height="18" viewBox="0 0 10 18"><path d="M2 2 L8 9 L2 16" fill="none" stroke="#1c1a1a" stroke-width="2.400"/></svg>
<span style="left:306.5px;top:999.5px;font-size:24px;line-height:24px;color:#1c1a1a;letter-spacing:1.71px;-webkit-text-stroke:.55px;">Scripts</span>
<svg style="left:846px;top:1003.5px;" width="10" height="18" viewBox="0 0 10 18"><path d="M2 2 L8 9 L2 16" fill="none" stroke="#1c1a1a" stroke-width="2.400"/></svg>
<span style="left:306.5px;top:1035.6px;font-size:24px;line-height:24px;color:#1c1a1a;letter-spacing:1.94px;-webkit-text-stroke:.55px;">Import</span>
<svg style="left:846px;top:1039.6px;" width="10" height="18" viewBox="0 0 10 18"><path d="M2 2 L8 9 L2 16" fill="none" stroke="#1c1a1a" stroke-width="2.400"/></svg>
<span style="left:306.5px;top:1071.7px;font-size:24px;line-height:24px;color:#1c1a1a;letter-spacing:1.43px;-webkit-text-stroke:.55px;">Import from iPhone or iPad</span>
<svg style="left:846px;top:1075.7px;" width="10" height="18" viewBox="0 0 10 18"><path d="M2 2 L8 9 L2 16" fill="none" stroke="#1c1a1a" stroke-width="2.400"/></svg>
<div style="left:288px;top:1112.85px;width:573px;height:2px;background:rgba(0,0,0,.13);"></div>
<span style="left:306.5px;top:1129.5px;font-size:24px;line-height:24px;color:#1c1a1a;letter-spacing:0.94px;-webkit-text-stroke:.55px;">File Info...</span>
<span style="left:790.1px;top:1128.4px;font-size:25px;line-height:25px;color:#1c1a1a;font-family:'DejaVu Sans','Liberation Sans',sans-serif;-webkit-text-stroke:.55px;">⌘</span>
<span style="left:764.5px;top:1128.9px;font-size:25px;line-height:25px;color:#1c1a1a;font-weight:700;font-family:'DejaVu Sans','Liberation Sans',sans-serif;transform:scale(1.500,1);">⇧</span>
<span style="left:732.6px;top:1128.0px;font-size:25px;line-height:25px;color:#1c1a1a;font-family:'DejaVu Sans','Liberation Sans',sans-serif;-webkit-text-stroke:.55px;transform:scale(.84,1.200);transform-origin:50% 80%;">⌥</span>
<span style="left:821.0px;top:1128.6px;font-size:25px;line-height:25px;color:#1c1a1a;-webkit-text-stroke:.55px;">I</span>
<span style="left:306.5px;top:1165.6px;font-size:24px;line-height:24px;color:#1c1a1a;letter-spacing:1.50px;-webkit-text-stroke:.55px;">Version History</span>
<div style="left:288px;top:1206.75px;width:573px;height:2px;background:rgba(0,0,0,.13);"></div>
<span style="left:306.5px;top:1223.4px;font-size:24px;line-height:24px;color:#1c1a1a;letter-spacing:1.19px;-webkit-text-stroke:.55px;">Print...</span>
<span style="left:790.1px;top:1222.3px;font-size:25px;line-height:25px;color:#1c1a1a;font-family:'DejaVu Sans','Liberation Sans',sans-serif;-webkit-text-stroke:.55px;">⌘</span>
<span style="left:819.5px;top:1222.5px;font-size:25px;line-height:25px;color:#1c1a1a;-webkit-text-stroke:.55px;">P</span>
<span style="left:306.5px;top:1259.5px;font-size:24px;line-height:24px;color:#1c1a1a;letter-spacing:1.41px;-webkit-text-stroke:.55px;">Print One Copy</span>
<span style="left:790.1px;top:1258.4px;font-size:25px;line-height:25px;color:#1c1a1a;font-family:'DejaVu Sans','Liberation Sans',sans-serif;-webkit-text-stroke:.55px;">⌘</span>
<span style="left:764.5px;top:1258.9px;font-size:25px;line-height:25px;color:#1c1a1a;font-weight:700;font-family:'DejaVu Sans','Liberation Sans',sans-serif;transform:scale(1.500,1);">⇧</span>
<span style="left:732.6px;top:1258.0px;font-size:25px;line-height:25px;color:#1c1a1a;font-family:'DejaVu Sans','Liberation Sans',sans-serif;-webkit-text-stroke:.55px;transform:scale(.84,1.200);transform-origin:50% 80%;">⌥</span>
<span style="left:819.5px;top:1258.6px;font-size:25px;line-height:25px;color:#1c1a1a;-webkit-text-stroke:.55px;">P</span>
<div style="left:880.5px;top:652px;width:607px;height:648px;background:radial-gradient(ellipse 420px 200px at 78% 92%,rgba(255,255,255,.07),transparent),#9a8685;border-radius:13px;box-shadow:0 14px 30px -8px rgba(0,0,0,.4),0 0 10px rgba(0,0,0,.12),0 0 0 1px rgba(0,0,0,.3),inset 0 0 0 1.500px rgba(255,255,255,.13);"></div>
<span style="left:927.0px;top:667.3px;font-size:24px;line-height:24px;color:#1c1a1a;letter-spacing:1.22px;-webkit-text-stroke:.55px;">Quick Export as PNG</span>
<div style="left:888px;top:692px;width:592px;height:48px;background:#578fee;border:7px solid #e0673a;box-sizing:border-box;"></div>
<span style="left:927.0px;top:703.4px;font-size:24px;line-height:24px;color:#ffffff;letter-spacing:1.30px;-webkit-text-stroke:.55px;">Export As...</span>
<span style="left:1388.0px;top:702.3px;font-size:25px;line-height:25px;color:#ffffff;font-family:'DejaVu Sans','Liberation Sans',sans-serif;-webkit-text-stroke:.55px;">⌘</span>
<span style="left:1362.5px;top:702.8px;font-size:25px;line-height:25px;color:#ffffff;font-weight:700;font-family:'DejaVu Sans','Liberation Sans',sans-serif;transform:scale(1.500,1);">⇧</span>
<span style="left:1330.6px;top:701.9px;font-size:25px;line-height:25px;color:#ffffff;font-family:'DejaVu Sans','Liberation Sans',sans-serif;-webkit-text-stroke:.55px;transform:scale(.84,1.200);transform-origin:50% 80%;">⌥</span>
<span style="left:1417.5px;top:702.5px;font-size:25px;line-height:25px;color:#ffffff;-webkit-text-stroke:.55px;">W</span>
<div style="left:908px;top:744.55px;width:552px;height:2px;background:rgba(0,0,0,.13);"></div>
<span style="left:927.0px;top:761.2px;font-size:24px;line-height:24px;color:#1c1a1a;letter-spacing:1.35px;-webkit-text-stroke:.55px;">Export Preferences...</span>
<div style="left:908px;top:802.35px;width:552px;height:2px;background:rgba(0,0,0,.13);"></div>
<span style="left:927.0px;top:819.0px;font-size:24px;line-height:24px;color:#1c1a1a;letter-spacing:1.29px;-webkit-text-stroke:.55px;">Save for Web (Legacy)...</span>
<span style="left:1388.0px;top:817.9px;font-size:25px;line-height:25px;color:#1c1a1a;font-family:'DejaVu Sans','Liberation Sans',sans-serif;-webkit-text-stroke:.55px;">⌘</span>
<span style="left:1362.5px;top:818.4px;font-size:25px;line-height:25px;color:#1c1a1a;font-weight:700;font-family:'DejaVu Sans','Liberation Sans',sans-serif;transform:scale(1.500,1);">⇧</span>
<span style="left:1330.6px;top:817.5px;font-size:25px;line-height:25px;color:#1c1a1a;font-family:'DejaVu Sans','Liberation Sans',sans-serif;-webkit-text-stroke:.55px;transform:scale(.84,1.200);transform-origin:50% 80%;">⌥</span>
<span style="left:1417.5px;top:818.1px;font-size:25px;line-height:25px;color:#1c1a1a;-webkit-text-stroke:.55px;">S</span>
<div style="left:908px;top:860.15px;width:552px;height:2px;background:rgba(0,0,0,.13);"></div>
<span style="left:927.0px;top:876.8px;font-size:24px;line-height:24px;color:rgba(0,0,0,.2);letter-spacing:1.37px;-webkit-text-stroke:.55px;">Artboards to Files...</span>
<span style="left:927.0px;top:912.9px;font-size:24px;line-height:24px;color:rgba(0,0,0,.2);letter-spacing:1.35px;-webkit-text-stroke:.55px;">Artboards to PDF...</span>
<span style="left:927.0px;top:949.0px;font-size:24px;line-height:24px;color:#1c1a1a;letter-spacing:1.25px;-webkit-text-stroke:.55px;">Export For Aero...</span>
<span style="left:927.0px;top:985.1px;font-size:24px;line-height:24px;color:rgba(0,0,0,.2);letter-spacing:1.22px;-webkit-text-stroke:.55px;">Layer Comps to Files...</span>
<span style="left:927.0px;top:1021.2px;font-size:24px;line-height:24px;color:rgba(0,0,0,.2);letter-spacing:1.23px;-webkit-text-stroke:.55px;">Layer Comps to PDF...</span>
<span style="left:927.0px;top:1057.3px;font-size:24px;line-height:24px;color:#1c1a1a;letter-spacing:1.06px;-webkit-text-stroke:.55px;">Layers to Files...</span>
<span style="left:927.0px;top:1093.4px;font-size:24px;line-height:24px;color:#1c1a1a;letter-spacing:1.36px;-webkit-text-stroke:.55px;">Color Lookup Tables...</span>
<div style="left:908px;top:1134.55px;width:552px;height:2px;background:rgba(0,0,0,.13);"></div>
<span style="left:927.0px;top:1151.2px;font-size:24px;line-height:24px;color:rgba(0,0,0,.2);letter-spacing:1.04px;-webkit-text-stroke:.55px;">Data Sets as Files...</span>
<span style="left:927.0px;top:1187.3px;font-size:24px;line-height:24px;color:#1c1a1a;letter-spacing:1.30px;-webkit-text-stroke:.55px;">ATEM Switcher Media Pool...</span>
<span style="left:927.0px;top:1223.4px;font-size:24px;line-height:24px;color:#1c1a1a;letter-spacing:1.30px;-webkit-text-stroke:.55px;">Paths to Illustrator...</span>
<span style="left:927.0px;top:1259.5px;font-size:24px;line-height:24px;color:#1c1a1a;letter-spacing:1.23px;-webkit-text-stroke:.55px;">Render Video...</span>
</body></html>
